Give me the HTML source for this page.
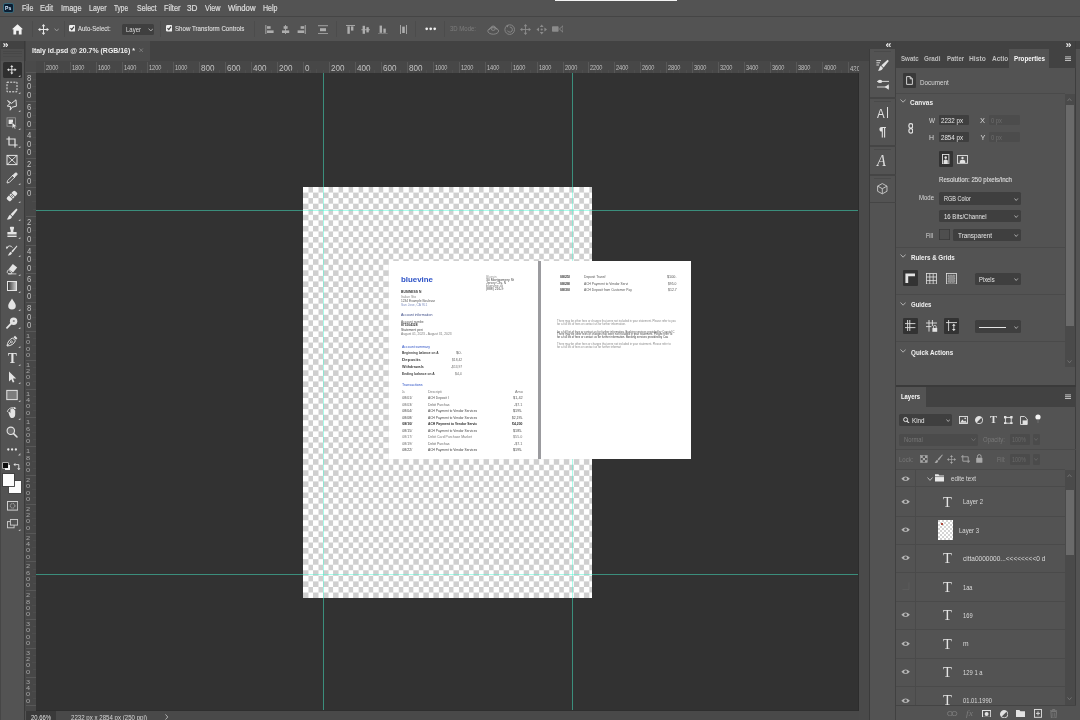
<!DOCTYPE html>
<html><head><meta charset="utf-8"><title>Photoshop</title>
<style>
html,body{margin:0;padding:0;background:#323232;}
body{width:1080px;height:720px;overflow:hidden;position:relative;font-family:"Liberation Sans",sans-serif;}
#f{position:absolute;left:-8px;top:-8px;width:1096px;height:736px;background:#535353;will-change:transform;filter:blur(0.35px);}
#r{position:absolute;left:8px;top:8px;width:1080px;height:720px;}
#r div,#r svg,#r span{position:absolute;}
.t{white-space:nowrap;transform-origin:0 50%;display:block;}
</style></head><body><div id="f"><div id="r">
<div style="left:0px;top:0px;width:1080px;height:16px;background:#535353;"></div>
<div style="left:0px;top:16.1px;width:1080px;height:1.3px;background:#454545;"></div>
<div style="left:0px;top:17px;width:1080px;height:23.5px;background:#535353;"></div>
<div style="left:0px;top:40.5px;width:1080px;height:20.5px;background:#424242;"></div>
<div style="left:25px;top:61px;width:834px;height:650px;background:#323232;"></div>
<div style="left:303.2px;top:187px;width:289.3px;height:411px;background-color:#fff;background-image:conic-gradient(#cfcfcf 25%,#fff 0 50%,#cfcfcf 0 75%,#fff 0);background-size:10.04px 11.12px;"></div>
<div style="left:323px;top:71.5px;width:1.2px;height:640px;background:rgba(70,250,212,0.46);"></div>
<div style="left:572px;top:71.5px;width:1.2px;height:640px;background:rgba(70,250,212,0.46);"></div>
<div style="left:35.5px;top:209.9px;width:823px;height:1.2px;background:rgba(70,250,212,0.46);"></div>
<div style="left:35.5px;top:574px;width:823px;height:1.2px;background:rgba(70,250,212,0.46);"></div>
<div style="left:388.5px;top:260.5px;width:302.5px;height:198.5px;background:#fff;"></div>
<div style="left:537.8px;top:260.5px;width:3.6px;height:198.5px;background:#9b9b9f;"></div>
<span class="t" style="left:401.4px;top:274px;font-size:7.6px;line-height:11px;height:11px;color:#2d52c6;font-weight:700;transform:scaleX(1.038);">bluevine</span>
<span class="t" style="left:485.9px;top:274px;font-size:3.6px;line-height:6px;height:6px;color:#9a9a9a;transform:scaleX(0.898);">Bluevin</span>
<span class="t" style="left:485.9px;top:277px;font-size:3.6px;line-height:6px;height:6px;color:#444;transform:scaleX(0.949);">30 Montgomery St</span>
<span class="t" style="left:485.9px;top:280px;font-size:3.6px;line-height:6px;height:6px;color:#555;transform:scaleX(0.908);">Jersey City, N</span>
<span class="t" style="left:485.9px;top:283px;font-size:3.6px;line-height:6px;height:6px;color:#777;transform:scaleX(0.950);">bluevine.co</span>
<span class="t" style="left:485.9px;top:286px;font-size:3.6px;line-height:6px;height:6px;color:#444;transform:scaleX(0.929);">(888) 216-9</span>
<span class="t" style="left:401.4px;top:289px;font-size:3.6px;line-height:6px;height:6px;color:#333;font-weight:700;transform:scaleX(0.927);">BUSINESS N</span>
<span class="t" style="left:401.4px;top:294px;font-size:3.6px;line-height:6px;height:6px;color:#8a8a8a;transform:scaleX(0.949);">Italian Sto</span>
<span class="t" style="left:401.4px;top:298px;font-size:3.6px;line-height:6px;height:6px;color:#555;transform:scaleX(0.895);">1234 Example Boulevar</span>
<span class="t" style="left:401.4px;top:302px;font-size:3.6px;line-height:6px;height:6px;color:#7f8fc0;transform:scaleX(0.913);">San Jose, CA 951</span>
<span class="t" style="left:401.4px;top:312px;font-size:3.6px;line-height:6px;height:6px;color:#3a4a86;transform:scaleX(0.987);">Account information</span>
<span class="t" style="left:401.4px;top:319px;font-size:3.6px;line-height:6px;height:6px;color:#555;transform:scaleX(0.903);">Account numbe</span>
<span class="t" style="left:401.4px;top:322px;font-size:3.6px;line-height:6px;height:6px;color:#333;font-weight:700;transform:scaleX(0.916);">875104328</span>
<span class="t" style="left:401.4px;top:327px;font-size:3.6px;line-height:6px;height:6px;color:#444;transform:scaleX(0.931);">Statement peri</span>
<span class="t" style="left:401.4px;top:331px;font-size:3.6px;line-height:6px;height:6px;color:#777;transform:scaleX(0.913);">August 01, 2023 - August 31, 2023</span>
<span class="t" style="left:401.9px;top:344px;font-size:3.6px;line-height:6px;height:6px;color:#2d52c6;transform:scaleX(0.972);">Account summary</span>
<span class="t" style="left:402.2px;top:350px;font-size:3.6px;line-height:6px;height:6px;color:#444;font-weight:700;transform:scaleX(0.896);">Beginning balance on A</span>
<span class="t" style="left:456.1px;top:350px;font-size:3.6px;line-height:6px;height:6px;color:#666;transform:scaleX(1.179);">$0.</span>
<span class="t" style="left:402.2px;top:357px;font-size:3.6px;line-height:6px;height:6px;color:#444;font-weight:700;transform:scaleX(1.237);">Deposits</span>
<span class="t" style="left:451.9px;top:357px;font-size:3.6px;line-height:6px;height:6px;color:#666;transform:scaleX(0.917);">$18,42</span>
<span class="t" style="left:402.2px;top:364px;font-size:3.6px;line-height:6px;height:6px;color:#444;font-weight:700;transform:scaleX(1.030);">Withdrawals</span>
<span class="t" style="left:451px;top:364px;font-size:3.6px;line-height:6px;height:6px;color:#666;transform:scaleX(0.901);">-$13,97</span>
<span class="t" style="left:402.2px;top:371px;font-size:3.6px;line-height:6px;height:6px;color:#444;font-weight:700;transform:scaleX(0.925);">Ending balance on A</span>
<span class="t" style="left:455.3px;top:371px;font-size:3.6px;line-height:6px;height:6px;color:#666;transform:scaleX(0.956);">$4,4</span>
<span class="t" style="left:402px;top:382px;font-size:3.6px;line-height:6px;height:6px;color:#2d52c6;transform:scaleX(1.011);">Transactions</span>
<span class="t" style="left:402.2px;top:389px;font-size:3.6px;line-height:6px;height:6px;color:#777;transform:scaleX(0.608);">Da</span>
<span class="t" style="left:428.3px;top:389px;font-size:3.6px;line-height:6px;height:6px;color:#777;transform:scaleX(0.971);">Descripti</span>
<span class="t" style="left:514.8px;top:389px;font-size:3.6px;line-height:6px;height:6px;color:#777;transform:scaleX(1.067);">Amo</span>
<span class="t" style="left:402.2px;top:395px;font-size:3.6px;line-height:6px;height:6px;color:#555;">08/01/</span>
<span class="t" style="left:428.3px;top:395px;font-size:3.6px;line-height:6px;height:6px;color:#555;transform:scaleX(0.908);">ACH Deposit I</span>
<span class="t" style="left:513px;top:395px;font-size:3.6px;line-height:6px;height:6px;color:#555;transform:scaleX(1.077);">$1,42</span>
<span class="t" style="left:402.2px;top:402px;font-size:3.6px;line-height:6px;height:6px;color:#666;">08/03/</span>
<span class="t" style="left:428.3px;top:402px;font-size:3.6px;line-height:6px;height:6px;color:#666;transform:scaleX(0.955);">Debit Purchas</span>
<span class="t" style="left:514.3px;top:402px;font-size:3.6px;line-height:6px;height:6px;color:#666;transform:scaleX(1.024);">-$7.1</span>
<span class="t" style="left:402.2px;top:408px;font-size:3.6px;line-height:6px;height:6px;color:#444;">08/04/</span>
<span class="t" style="left:428.3px;top:408px;font-size:3.6px;line-height:6px;height:6px;color:#444;transform:scaleX(0.911);">ACH Payment to Vendor Services</span>
<span class="t" style="left:513.4px;top:408px;font-size:3.6px;line-height:6px;height:6px;color:#444;transform:scaleX(1.032);">$195.</span>
<span class="t" style="left:402.2px;top:415px;font-size:3.6px;line-height:6px;height:6px;color:#444;">08/08/</span>
<span class="t" style="left:428.3px;top:415px;font-size:3.6px;line-height:6px;height:6px;color:#444;transform:scaleX(0.911);">ACH Payment to Vendor Services</span>
<span class="t" style="left:511.7px;top:415px;font-size:3.6px;line-height:6px;height:6px;color:#444;transform:scaleX(0.916);">$2,195.</span>
<span class="t" style="left:402.2px;top:421px;font-size:3.6px;line-height:6px;height:6px;color:#2c2c2c;font-weight:700;">08/10/</span>
<span class="t" style="left:428.3px;top:421px;font-size:3.6px;line-height:6px;height:6px;color:#2c2c2c;font-weight:700;transform:scaleX(0.925);">ACH Payment to Vendor Servic</span>
<span class="t" style="left:512.2px;top:421px;font-size:3.6px;line-height:6px;height:6px;color:#2c2c2c;font-weight:700;transform:scaleX(0.954);">$4,200</span>
<span class="t" style="left:402.2px;top:428px;font-size:3.6px;line-height:6px;height:6px;color:#4a4a4a;">08/15/</span>
<span class="t" style="left:428.3px;top:428px;font-size:3.6px;line-height:6px;height:6px;color:#4a4a4a;transform:scaleX(0.911);">ACH Payment to Vendor Services</span>
<span class="t" style="left:513.4px;top:428px;font-size:3.6px;line-height:6px;height:6px;color:#4a4a4a;transform:scaleX(1.032);">$185.</span>
<span class="t" style="left:402.2px;top:434px;font-size:3.6px;line-height:6px;height:6px;color:#777;">08/17/</span>
<span class="t" style="left:428.3px;top:434px;font-size:3.6px;line-height:6px;height:6px;color:#777;transform:scaleX(0.967);">Debit Card Purchase Market</span>
<span class="t" style="left:513.4px;top:434px;font-size:3.6px;line-height:6px;height:6px;color:#777;transform:scaleX(1.032);">$55.0</span>
<span class="t" style="left:402.2px;top:441px;font-size:3.6px;line-height:6px;height:6px;color:#666;">08/19/</span>
<span class="t" style="left:428.3px;top:441px;font-size:3.6px;line-height:6px;height:6px;color:#666;transform:scaleX(0.955);">Debit Purchas</span>
<span class="t" style="left:514.3px;top:441px;font-size:3.6px;line-height:6px;height:6px;color:#666;transform:scaleX(1.024);">-$7.1</span>
<span class="t" style="left:402.2px;top:447px;font-size:3.6px;line-height:6px;height:6px;color:#3a3a3a;">08/22/</span>
<span class="t" style="left:428.3px;top:447px;font-size:3.6px;line-height:6px;height:6px;color:#3a3a3a;transform:scaleX(0.911);">ACH Payment to Vendor Services</span>
<span class="t" style="left:513.4px;top:447px;font-size:3.6px;line-height:6px;height:6px;color:#3a3a3a;transform:scaleX(1.032);">$195.</span>
<span class="t" style="left:560.4px;top:274px;font-size:3.6px;line-height:6px;height:6px;color:#333;font-weight:700;transform:scaleX(0.989);">08/25/</span>
<span class="t" style="left:584.4px;top:274px;font-size:3.6px;line-height:6px;height:6px;color:#555;transform:scaleX(0.926);">Deposit Transf</span>
<span class="t" style="left:666.8px;top:274px;font-size:3.6px;line-height:6px;height:6px;color:#555;transform:scaleX(1.055);">$100.</span>
<span class="t" style="left:560.4px;top:281px;font-size:3.6px;line-height:6px;height:6px;color:#333;font-weight:700;transform:scaleX(0.989);">08/28/</span>
<span class="t" style="left:584.4px;top:281px;font-size:3.6px;line-height:6px;height:6px;color:#555;transform:scaleX(0.911);">ACH Payment to Vendor Servi</span>
<span class="t" style="left:667.9px;top:281px;font-size:3.6px;line-height:6px;height:6px;color:#555;transform:scaleX(0.932);">$95.0</span>
<span class="t" style="left:560.4px;top:287px;font-size:3.6px;line-height:6px;height:6px;color:#333;font-weight:700;transform:scaleX(0.989);">08/30/</span>
<span class="t" style="left:584.4px;top:287px;font-size:3.6px;line-height:6px;height:6px;color:#555;transform:scaleX(0.907);">ACH Deposit from Customer Pay</span>
<span class="t" style="left:667.5px;top:287px;font-size:3.6px;line-height:6px;height:6px;color:#555;transform:scaleX(0.977);">$12.7</span>
<span class="t" style="left:556.9px;top:318px;font-size:3.1px;line-height:6px;height:6px;color:#8a8a8a;transform:scaleX(0.896);">There may be other fees or charges that were not included in your statement. Please refer to you</span>
<span class="t" style="left:556.9px;top:321px;font-size:3.1px;line-height:6px;height:6px;color:#8a8a8a;transform:scaleX(0.910);">for a full list of fees or contact us for further information.</span>
<span class="t" style="left:556.9px;top:329px;font-size:3.1px;line-height:6px;height:6px;color:#555;transform:scaleX(0.895);">for a full list of fees or contact us for further information. Banking services provided by Coastal C</span>
<span class="t" style="left:556.9px;top:331px;font-size:3.1px;line-height:6px;height:6px;color:#4a4a4a;transform:scaleX(0.909);">There may be other fees or charges that were not included in your statement. Please refer to</span>
<span class="t" style="left:556.9px;top:334px;font-size:3.1px;line-height:6px;height:6px;color:#3c3c3c;transform:scaleX(0.901);">for a full list of fees or contact us for further information. Banking services provided by Coa</span>
<span class="t" style="left:556.9px;top:341px;font-size:3.1px;line-height:6px;height:6px;color:#8a8a8a;transform:scaleX(0.898);">There may be other fees or charges that were not included in your statement. Please refer to</span>
<span class="t" style="left:556.9px;top:344px;font-size:3.1px;line-height:6px;height:6px;color:#8a8a8a;transform:scaleX(0.905);">for a full list of fees or contact us for further informat</span>
<div style="left:25px;top:61px;width:834px;height:11.5px;background:#474747;"></div>
<div style="left:25px;top:61px;width:11px;height:650px;background:#474747;"></div>
<div style="left:25px;top:61px;width:11px;height:11.5px;background:#4a4a4a;"></div>
<div style="left:43.7px;top:61.5px;width:1px;height:11px;background:#585858;"></div>
<span class="t" style="left:45.7px;top:62px;font-size:7.6px;line-height:11px;height:11px;color:#c2c2c2;transform:scaleX(0.739);">2000</span>
<div style="left:50.18px;top:70px;width:1px;height:2.5px;background:#4d4d4d;"></div>
<div style="left:56.67px;top:69px;width:1px;height:3.5px;background:#4d4d4d;"></div>
<div style="left:63.15px;top:70px;width:1px;height:2.5px;background:#4d4d4d;"></div>
<div style="left:69.64px;top:61.5px;width:1px;height:11px;background:#585858;"></div>
<span class="t" style="left:71.64px;top:62px;font-size:7.6px;line-height:11px;height:11px;color:#c2c2c2;transform:scaleX(0.739);">1800</span>
<div style="left:76.13px;top:70px;width:1px;height:2.5px;background:#4d4d4d;"></div>
<div style="left:82.61px;top:69px;width:1px;height:3.5px;background:#4d4d4d;"></div>
<div style="left:89.1px;top:70px;width:1px;height:2.5px;background:#4d4d4d;"></div>
<div style="left:95.58px;top:61.5px;width:1px;height:11px;background:#585858;"></div>
<span class="t" style="left:97.58px;top:62px;font-size:7.6px;line-height:11px;height:11px;color:#c2c2c2;transform:scaleX(0.739);">1600</span>
<div style="left:102.07px;top:70px;width:1px;height:2.5px;background:#4d4d4d;"></div>
<div style="left:108.55px;top:69px;width:1px;height:3.5px;background:#4d4d4d;"></div>
<div style="left:115.04px;top:70px;width:1px;height:2.5px;background:#4d4d4d;"></div>
<div style="left:121.52px;top:61.5px;width:1px;height:11px;background:#585858;"></div>
<span class="t" style="left:123.52px;top:62px;font-size:7.6px;line-height:11px;height:11px;color:#c2c2c2;transform:scaleX(0.739);">1400</span>
<div style="left:128.01px;top:70px;width:1px;height:2.5px;background:#4d4d4d;"></div>
<div style="left:134.49px;top:69px;width:1px;height:3.5px;background:#4d4d4d;"></div>
<div style="left:140.98px;top:70px;width:1px;height:2.5px;background:#4d4d4d;"></div>
<div style="left:147.46px;top:61.5px;width:1px;height:11px;background:#585858;"></div>
<span class="t" style="left:149.46px;top:62px;font-size:7.6px;line-height:11px;height:11px;color:#c2c2c2;transform:scaleX(0.739);">1200</span>
<div style="left:153.95px;top:70px;width:1px;height:2.5px;background:#4d4d4d;"></div>
<div style="left:160.43px;top:69px;width:1px;height:3.5px;background:#4d4d4d;"></div>
<div style="left:166.92px;top:70px;width:1px;height:2.5px;background:#4d4d4d;"></div>
<div style="left:173.4px;top:61.5px;width:1px;height:11px;background:#585858;"></div>
<span class="t" style="left:175.4px;top:62px;font-size:7.6px;line-height:11px;height:11px;color:#c2c2c2;transform:scaleX(0.739);">1000</span>
<div style="left:179.89px;top:70px;width:1px;height:2.5px;background:#4d4d4d;"></div>
<div style="left:186.37px;top:69px;width:1px;height:3.5px;background:#4d4d4d;"></div>
<div style="left:192.86px;top:70px;width:1px;height:2.5px;background:#4d4d4d;"></div>
<div style="left:199.34px;top:61.5px;width:1px;height:11px;background:#585858;"></div>
<span class="t" style="left:201.34px;top:62px;font-size:8.6px;line-height:12px;height:12px;color:#c2c2c2;transform:scaleX(0.941);">800</span>
<div style="left:205.83px;top:70px;width:1px;height:2.5px;background:#4d4d4d;"></div>
<div style="left:212.31px;top:69px;width:1px;height:3.5px;background:#4d4d4d;"></div>
<div style="left:218.8px;top:70px;width:1px;height:2.5px;background:#4d4d4d;"></div>
<div style="left:225.28px;top:61.5px;width:1px;height:11px;background:#585858;"></div>
<span class="t" style="left:227.28px;top:62px;font-size:8.6px;line-height:12px;height:12px;color:#c2c2c2;transform:scaleX(0.941);">600</span>
<div style="left:231.77px;top:70px;width:1px;height:2.5px;background:#4d4d4d;"></div>
<div style="left:238.25px;top:69px;width:1px;height:3.5px;background:#4d4d4d;"></div>
<div style="left:244.74px;top:70px;width:1px;height:2.5px;background:#4d4d4d;"></div>
<div style="left:251.22px;top:61.5px;width:1px;height:11px;background:#585858;"></div>
<span class="t" style="left:253.22px;top:62px;font-size:8.6px;line-height:12px;height:12px;color:#c2c2c2;transform:scaleX(0.941);">400</span>
<div style="left:257.71px;top:70px;width:1px;height:2.5px;background:#4d4d4d;"></div>
<div style="left:264.19px;top:69px;width:1px;height:3.5px;background:#4d4d4d;"></div>
<div style="left:270.68px;top:70px;width:1px;height:2.5px;background:#4d4d4d;"></div>
<div style="left:277.16px;top:61.5px;width:1px;height:11px;background:#585858;"></div>
<span class="t" style="left:279.16px;top:62px;font-size:8.6px;line-height:12px;height:12px;color:#c2c2c2;transform:scaleX(0.941);">200</span>
<div style="left:283.65px;top:70px;width:1px;height:2.5px;background:#4d4d4d;"></div>
<div style="left:290.13px;top:69px;width:1px;height:3.5px;background:#4d4d4d;"></div>
<div style="left:296.62px;top:70px;width:1px;height:2.5px;background:#4d4d4d;"></div>
<div style="left:303.1px;top:61.5px;width:1px;height:11px;background:#585858;"></div>
<span class="t" style="left:305.1px;top:62px;font-size:8.6px;line-height:12px;height:12px;color:#c2c2c2;transform:scaleX(0.941);">0</span>
<div style="left:309.59px;top:70px;width:1px;height:2.5px;background:#4d4d4d;"></div>
<div style="left:316.07px;top:69px;width:1px;height:3.5px;background:#4d4d4d;"></div>
<div style="left:322.56px;top:70px;width:1px;height:2.5px;background:#4d4d4d;"></div>
<div style="left:329.04px;top:61.5px;width:1px;height:11px;background:#585858;"></div>
<span class="t" style="left:331.04px;top:62px;font-size:8.6px;line-height:12px;height:12px;color:#c2c2c2;transform:scaleX(0.941);">200</span>
<div style="left:335.53px;top:70px;width:1px;height:2.5px;background:#4d4d4d;"></div>
<div style="left:342.01px;top:69px;width:1px;height:3.5px;background:#4d4d4d;"></div>
<div style="left:348.5px;top:70px;width:1px;height:2.5px;background:#4d4d4d;"></div>
<div style="left:354.98px;top:61.5px;width:1px;height:11px;background:#585858;"></div>
<span class="t" style="left:356.98px;top:62px;font-size:8.6px;line-height:12px;height:12px;color:#c2c2c2;transform:scaleX(0.941);">400</span>
<div style="left:361.47px;top:70px;width:1px;height:2.5px;background:#4d4d4d;"></div>
<div style="left:367.95px;top:69px;width:1px;height:3.5px;background:#4d4d4d;"></div>
<div style="left:374.44px;top:70px;width:1px;height:2.5px;background:#4d4d4d;"></div>
<div style="left:380.92px;top:61.5px;width:1px;height:11px;background:#585858;"></div>
<span class="t" style="left:382.92px;top:62px;font-size:8.6px;line-height:12px;height:12px;color:#c2c2c2;transform:scaleX(0.941);">600</span>
<div style="left:387.41px;top:70px;width:1px;height:2.5px;background:#4d4d4d;"></div>
<div style="left:393.89px;top:69px;width:1px;height:3.5px;background:#4d4d4d;"></div>
<div style="left:400.38px;top:70px;width:1px;height:2.5px;background:#4d4d4d;"></div>
<div style="left:406.86px;top:61.5px;width:1px;height:11px;background:#585858;"></div>
<span class="t" style="left:408.86px;top:62px;font-size:8.6px;line-height:12px;height:12px;color:#c2c2c2;transform:scaleX(0.941);">800</span>
<div style="left:413.35px;top:70px;width:1px;height:2.5px;background:#4d4d4d;"></div>
<div style="left:419.83px;top:69px;width:1px;height:3.5px;background:#4d4d4d;"></div>
<div style="left:426.31px;top:70px;width:1px;height:2.5px;background:#4d4d4d;"></div>
<div style="left:432.8px;top:61.5px;width:1px;height:11px;background:#585858;"></div>
<span class="t" style="left:434.8px;top:62px;font-size:7.6px;line-height:11px;height:11px;color:#c2c2c2;transform:scaleX(0.739);">1000</span>
<div style="left:439.29px;top:70px;width:1px;height:2.5px;background:#4d4d4d;"></div>
<div style="left:445.77px;top:69px;width:1px;height:3.5px;background:#4d4d4d;"></div>
<div style="left:452.26px;top:70px;width:1px;height:2.5px;background:#4d4d4d;"></div>
<div style="left:458.74px;top:61.5px;width:1px;height:11px;background:#585858;"></div>
<span class="t" style="left:460.74px;top:62px;font-size:7.6px;line-height:11px;height:11px;color:#c2c2c2;transform:scaleX(0.739);">1200</span>
<div style="left:465.23px;top:70px;width:1px;height:2.5px;background:#4d4d4d;"></div>
<div style="left:471.71px;top:69px;width:1px;height:3.5px;background:#4d4d4d;"></div>
<div style="left:478.19px;top:70px;width:1px;height:2.5px;background:#4d4d4d;"></div>
<div style="left:484.68px;top:61.5px;width:1px;height:11px;background:#585858;"></div>
<span class="t" style="left:486.68px;top:62px;font-size:7.6px;line-height:11px;height:11px;color:#c2c2c2;transform:scaleX(0.739);">1400</span>
<div style="left:491.17px;top:70px;width:1px;height:2.5px;background:#4d4d4d;"></div>
<div style="left:497.65px;top:69px;width:1px;height:3.5px;background:#4d4d4d;"></div>
<div style="left:504.14px;top:70px;width:1px;height:2.5px;background:#4d4d4d;"></div>
<div style="left:510.62px;top:61.5px;width:1px;height:11px;background:#585858;"></div>
<span class="t" style="left:512.62px;top:62px;font-size:7.6px;line-height:11px;height:11px;color:#c2c2c2;transform:scaleX(0.739);">1600</span>
<div style="left:517.11px;top:70px;width:1px;height:2.5px;background:#4d4d4d;"></div>
<div style="left:523.59px;top:69px;width:1px;height:3.5px;background:#4d4d4d;"></div>
<div style="left:530.08px;top:70px;width:1px;height:2.5px;background:#4d4d4d;"></div>
<div style="left:536.56px;top:61.5px;width:1px;height:11px;background:#585858;"></div>
<span class="t" style="left:538.56px;top:62px;font-size:7.6px;line-height:11px;height:11px;color:#c2c2c2;transform:scaleX(0.739);">1800</span>
<div style="left:543.05px;top:70px;width:1px;height:2.5px;background:#4d4d4d;"></div>
<div style="left:549.53px;top:69px;width:1px;height:3.5px;background:#4d4d4d;"></div>
<div style="left:556.02px;top:70px;width:1px;height:2.5px;background:#4d4d4d;"></div>
<div style="left:562.5px;top:61.5px;width:1px;height:11px;background:#585858;"></div>
<span class="t" style="left:564.5px;top:62px;font-size:7.6px;line-height:11px;height:11px;color:#c2c2c2;transform:scaleX(0.739);">2000</span>
<div style="left:568.99px;top:70px;width:1px;height:2.5px;background:#4d4d4d;"></div>
<div style="left:575.47px;top:69px;width:1px;height:3.5px;background:#4d4d4d;"></div>
<div style="left:581.96px;top:70px;width:1px;height:2.5px;background:#4d4d4d;"></div>
<div style="left:588.44px;top:61.5px;width:1px;height:11px;background:#585858;"></div>
<span class="t" style="left:590.44px;top:62px;font-size:7.6px;line-height:11px;height:11px;color:#c2c2c2;transform:scaleX(0.739);">2200</span>
<div style="left:594.93px;top:70px;width:1px;height:2.5px;background:#4d4d4d;"></div>
<div style="left:601.41px;top:69px;width:1px;height:3.5px;background:#4d4d4d;"></div>
<div style="left:607.9px;top:70px;width:1px;height:2.5px;background:#4d4d4d;"></div>
<div style="left:614.38px;top:61.5px;width:1px;height:11px;background:#585858;"></div>
<span class="t" style="left:616.38px;top:62px;font-size:7.6px;line-height:11px;height:11px;color:#c2c2c2;transform:scaleX(0.739);">2400</span>
<div style="left:620.87px;top:70px;width:1px;height:2.5px;background:#4d4d4d;"></div>
<div style="left:627.35px;top:69px;width:1px;height:3.5px;background:#4d4d4d;"></div>
<div style="left:633.84px;top:70px;width:1px;height:2.5px;background:#4d4d4d;"></div>
<div style="left:640.32px;top:61.5px;width:1px;height:11px;background:#585858;"></div>
<span class="t" style="left:642.32px;top:62px;font-size:7.6px;line-height:11px;height:11px;color:#c2c2c2;transform:scaleX(0.739);">2600</span>
<div style="left:646.81px;top:70px;width:1px;height:2.5px;background:#4d4d4d;"></div>
<div style="left:653.29px;top:69px;width:1px;height:3.5px;background:#4d4d4d;"></div>
<div style="left:659.78px;top:70px;width:1px;height:2.5px;background:#4d4d4d;"></div>
<div style="left:666.26px;top:61.5px;width:1px;height:11px;background:#585858;"></div>
<span class="t" style="left:668.26px;top:62px;font-size:7.6px;line-height:11px;height:11px;color:#c2c2c2;transform:scaleX(0.739);">2800</span>
<div style="left:672.75px;top:70px;width:1px;height:2.5px;background:#4d4d4d;"></div>
<div style="left:679.23px;top:69px;width:1px;height:3.5px;background:#4d4d4d;"></div>
<div style="left:685.72px;top:70px;width:1px;height:2.5px;background:#4d4d4d;"></div>
<div style="left:692.2px;top:61.5px;width:1px;height:11px;background:#585858;"></div>
<span class="t" style="left:694.2px;top:62px;font-size:7.6px;line-height:11px;height:11px;color:#c2c2c2;transform:scaleX(0.739);">3000</span>
<div style="left:698.69px;top:70px;width:1px;height:2.5px;background:#4d4d4d;"></div>
<div style="left:705.17px;top:69px;width:1px;height:3.5px;background:#4d4d4d;"></div>
<div style="left:711.66px;top:70px;width:1px;height:2.5px;background:#4d4d4d;"></div>
<div style="left:718.14px;top:61.5px;width:1px;height:11px;background:#585858;"></div>
<span class="t" style="left:720.14px;top:62px;font-size:7.6px;line-height:11px;height:11px;color:#c2c2c2;transform:scaleX(0.739);">3200</span>
<div style="left:724.63px;top:70px;width:1px;height:2.5px;background:#4d4d4d;"></div>
<div style="left:731.11px;top:69px;width:1px;height:3.5px;background:#4d4d4d;"></div>
<div style="left:737.6px;top:70px;width:1px;height:2.5px;background:#4d4d4d;"></div>
<div style="left:744.08px;top:61.5px;width:1px;height:11px;background:#585858;"></div>
<span class="t" style="left:746.08px;top:62px;font-size:7.6px;line-height:11px;height:11px;color:#c2c2c2;transform:scaleX(0.739);">3400</span>
<div style="left:750.57px;top:70px;width:1px;height:2.5px;background:#4d4d4d;"></div>
<div style="left:757.05px;top:69px;width:1px;height:3.5px;background:#4d4d4d;"></div>
<div style="left:763.54px;top:70px;width:1px;height:2.5px;background:#4d4d4d;"></div>
<div style="left:770.02px;top:61.5px;width:1px;height:11px;background:#585858;"></div>
<span class="t" style="left:772.02px;top:62px;font-size:7.6px;line-height:11px;height:11px;color:#c2c2c2;transform:scaleX(0.739);">3600</span>
<div style="left:776.5px;top:70px;width:1px;height:2.5px;background:#4d4d4d;"></div>
<div style="left:782.99px;top:69px;width:1px;height:3.5px;background:#4d4d4d;"></div>
<div style="left:789.48px;top:70px;width:1px;height:2.5px;background:#4d4d4d;"></div>
<div style="left:795.96px;top:61.5px;width:1px;height:11px;background:#585858;"></div>
<span class="t" style="left:797.96px;top:62px;font-size:7.6px;line-height:11px;height:11px;color:#c2c2c2;transform:scaleX(0.739);">3800</span>
<div style="left:802.45px;top:70px;width:1px;height:2.5px;background:#4d4d4d;"></div>
<div style="left:808.93px;top:69px;width:1px;height:3.5px;background:#4d4d4d;"></div>
<div style="left:815.42px;top:70px;width:1px;height:2.5px;background:#4d4d4d;"></div>
<div style="left:821.9px;top:61.5px;width:1px;height:11px;background:#585858;"></div>
<span class="t" style="left:823.9px;top:62px;font-size:7.6px;line-height:11px;height:11px;color:#c2c2c2;transform:scaleX(0.739);">4000</span>
<div style="left:828.39px;top:70px;width:1px;height:2.5px;background:#4d4d4d;"></div>
<div style="left:834.87px;top:69px;width:1px;height:3.5px;background:#4d4d4d;"></div>
<div style="left:841.36px;top:70px;width:1px;height:2.5px;background:#4d4d4d;"></div>
<div style="left:847.84px;top:61.5px;width:1px;height:11px;background:#585858;"></div>
<span class="t" style="left:849.84px;top:63px;font-size:7.6px;line-height:11px;height:11px;color:#c2c2c2;transform:scaleX(0.789);">420</span>
<div style="left:854.33px;top:70px;width:1px;height:2.5px;background:#4d4d4d;"></div>
<div style="left:25.5px;top:71.8px;width:10.5px;height:1px;background:#585858;"></div>
<span class="t" style="left:26.6px;top:73px;font-size:8.2px;line-height:12px;height:12px;color:#c2c2c2;transform:scaleX(0.943);">8</span>
<span class="t" style="left:26.6px;top:81px;font-size:8.2px;line-height:12px;height:12px;color:#c2c2c2;transform:scaleX(0.943);">0</span>
<span class="t" style="left:26.6px;top:90px;font-size:8.2px;line-height:12px;height:12px;color:#c2c2c2;transform:scaleX(0.943);">0</span>
<div style="left:33px;top:79.0px;width:3px;height:1px;background:#4d4d4d;"></div>
<div style="left:32px;top:86.2px;width:4px;height:1px;background:#4d4d4d;"></div>
<div style="left:33px;top:93.4px;width:3px;height:1px;background:#4d4d4d;"></div>
<div style="left:25.5px;top:100.6px;width:10.5px;height:1px;background:#585858;"></div>
<span class="t" style="left:26.6px;top:102px;font-size:8.2px;line-height:12px;height:12px;color:#c2c2c2;transform:scaleX(0.943);">6</span>
<span class="t" style="left:26.6px;top:110px;font-size:8.2px;line-height:12px;height:12px;color:#c2c2c2;transform:scaleX(0.943);">0</span>
<span class="t" style="left:26.6px;top:119px;font-size:8.2px;line-height:12px;height:12px;color:#c2c2c2;transform:scaleX(0.943);">0</span>
<div style="left:33px;top:107.8px;width:3px;height:1px;background:#4d4d4d;"></div>
<div style="left:32px;top:115.0px;width:4px;height:1px;background:#4d4d4d;"></div>
<div style="left:33px;top:122.2px;width:3px;height:1px;background:#4d4d4d;"></div>
<div style="left:25.5px;top:129.4px;width:10.5px;height:1px;background:#585858;"></div>
<span class="t" style="left:26.6px;top:130px;font-size:8.2px;line-height:12px;height:12px;color:#c2c2c2;transform:scaleX(0.943);">4</span>
<span class="t" style="left:26.6px;top:139px;font-size:8.2px;line-height:12px;height:12px;color:#c2c2c2;transform:scaleX(0.943);">0</span>
<span class="t" style="left:26.6px;top:147px;font-size:8.2px;line-height:12px;height:12px;color:#c2c2c2;transform:scaleX(0.943);">0</span>
<div style="left:33px;top:136.6px;width:3px;height:1px;background:#4d4d4d;"></div>
<div style="left:32px;top:143.8px;width:4px;height:1px;background:#4d4d4d;"></div>
<div style="left:33px;top:151.0px;width:3px;height:1px;background:#4d4d4d;"></div>
<div style="left:25.5px;top:158.2px;width:10.5px;height:1px;background:#585858;"></div>
<span class="t" style="left:26.6px;top:159px;font-size:8.2px;line-height:12px;height:12px;color:#c2c2c2;transform:scaleX(0.943);">2</span>
<span class="t" style="left:26.6px;top:168px;font-size:8.2px;line-height:12px;height:12px;color:#c2c2c2;transform:scaleX(0.943);">0</span>
<span class="t" style="left:26.6px;top:176px;font-size:8.2px;line-height:12px;height:12px;color:#c2c2c2;transform:scaleX(0.943);">0</span>
<div style="left:33px;top:165.4px;width:3px;height:1px;background:#4d4d4d;"></div>
<div style="left:32px;top:172.6px;width:4px;height:1px;background:#4d4d4d;"></div>
<div style="left:33px;top:179.8px;width:3px;height:1px;background:#4d4d4d;"></div>
<div style="left:25.5px;top:187.0px;width:10.5px;height:1px;background:#585858;"></div>
<span class="t" style="left:26.6px;top:188px;font-size:8.2px;line-height:12px;height:12px;color:#c2c2c2;transform:scaleX(0.943);">0</span>
<div style="left:33px;top:194.2px;width:3px;height:1px;background:#4d4d4d;"></div>
<div style="left:32px;top:201.4px;width:4px;height:1px;background:#4d4d4d;"></div>
<div style="left:33px;top:208.6px;width:3px;height:1px;background:#4d4d4d;"></div>
<div style="left:25.5px;top:215.8px;width:10.5px;height:1px;background:#585858;"></div>
<span class="t" style="left:26.6px;top:217px;font-size:8.2px;line-height:12px;height:12px;color:#c2c2c2;transform:scaleX(0.943);">2</span>
<span class="t" style="left:26.6px;top:225px;font-size:8.2px;line-height:12px;height:12px;color:#c2c2c2;transform:scaleX(0.943);">0</span>
<span class="t" style="left:26.6px;top:234px;font-size:8.2px;line-height:12px;height:12px;color:#c2c2c2;transform:scaleX(0.943);">0</span>
<div style="left:33px;top:223.0px;width:3px;height:1px;background:#4d4d4d;"></div>
<div style="left:32px;top:230.2px;width:4px;height:1px;background:#4d4d4d;"></div>
<div style="left:33px;top:237.4px;width:3px;height:1px;background:#4d4d4d;"></div>
<div style="left:25.5px;top:244.6px;width:10.5px;height:1px;background:#585858;"></div>
<span class="t" style="left:26.6px;top:246px;font-size:8.2px;line-height:12px;height:12px;color:#c2c2c2;transform:scaleX(0.943);">4</span>
<span class="t" style="left:26.6px;top:254px;font-size:8.2px;line-height:12px;height:12px;color:#c2c2c2;transform:scaleX(0.943);">0</span>
<span class="t" style="left:26.6px;top:263px;font-size:8.2px;line-height:12px;height:12px;color:#c2c2c2;transform:scaleX(0.943);">0</span>
<div style="left:33px;top:251.8px;width:3px;height:1px;background:#4d4d4d;"></div>
<div style="left:32px;top:259.0px;width:4px;height:1px;background:#4d4d4d;"></div>
<div style="left:33px;top:266.2px;width:3px;height:1px;background:#4d4d4d;"></div>
<div style="left:25.5px;top:273.4px;width:10.5px;height:1px;background:#585858;"></div>
<span class="t" style="left:26.6px;top:274px;font-size:8.2px;line-height:12px;height:12px;color:#c2c2c2;transform:scaleX(0.943);">6</span>
<span class="t" style="left:26.6px;top:283px;font-size:8.2px;line-height:12px;height:12px;color:#c2c2c2;transform:scaleX(0.943);">0</span>
<span class="t" style="left:26.6px;top:291px;font-size:8.2px;line-height:12px;height:12px;color:#c2c2c2;transform:scaleX(0.943);">0</span>
<div style="left:33px;top:280.6px;width:3px;height:1px;background:#4d4d4d;"></div>
<div style="left:32px;top:287.8px;width:4px;height:1px;background:#4d4d4d;"></div>
<div style="left:33px;top:295.0px;width:3px;height:1px;background:#4d4d4d;"></div>
<div style="left:25.5px;top:302.2px;width:10.5px;height:1px;background:#585858;"></div>
<span class="t" style="left:26.6px;top:303px;font-size:8.2px;line-height:12px;height:12px;color:#c2c2c2;transform:scaleX(0.943);">8</span>
<span class="t" style="left:26.6px;top:312px;font-size:8.2px;line-height:12px;height:12px;color:#c2c2c2;transform:scaleX(0.943);">0</span>
<span class="t" style="left:26.6px;top:320px;font-size:8.2px;line-height:12px;height:12px;color:#c2c2c2;transform:scaleX(0.943);">0</span>
<div style="left:33px;top:309.4px;width:3px;height:1px;background:#4d4d4d;"></div>
<div style="left:32px;top:316.6px;width:4px;height:1px;background:#4d4d4d;"></div>
<div style="left:33px;top:323.8px;width:3px;height:1px;background:#4d4d4d;"></div>
<div style="left:25.5px;top:331.0px;width:10.5px;height:1px;background:#585858;"></div>
<span class="t" style="left:26px;top:331px;font-size:6.2px;line-height:9px;height:9px;color:#a6a6a6;transform:scaleX(1.189);">1</span>
<span class="t" style="left:26px;top:337px;font-size:6.2px;line-height:9px;height:9px;color:#a6a6a6;transform:scaleX(1.189);">0</span>
<span class="t" style="left:26px;top:344px;font-size:6.2px;line-height:9px;height:9px;color:#a6a6a6;transform:scaleX(1.189);">0</span>
<span class="t" style="left:26px;top:350px;font-size:6.2px;line-height:9px;height:9px;color:#a6a6a6;transform:scaleX(1.189);">0</span>
<div style="left:33px;top:338.2px;width:3px;height:1px;background:#4d4d4d;"></div>
<div style="left:32px;top:345.4px;width:4px;height:1px;background:#4d4d4d;"></div>
<div style="left:33px;top:352.6px;width:3px;height:1px;background:#4d4d4d;"></div>
<div style="left:25.5px;top:359.8px;width:10.5px;height:1px;background:#585858;"></div>
<span class="t" style="left:26px;top:360px;font-size:6.2px;line-height:9px;height:9px;color:#a6a6a6;transform:scaleX(1.189);">1</span>
<span class="t" style="left:26px;top:366px;font-size:6.2px;line-height:9px;height:9px;color:#a6a6a6;transform:scaleX(1.189);">2</span>
<span class="t" style="left:26px;top:372px;font-size:6.2px;line-height:9px;height:9px;color:#a6a6a6;transform:scaleX(1.189);">0</span>
<span class="t" style="left:26px;top:379px;font-size:6.2px;line-height:9px;height:9px;color:#a6a6a6;transform:scaleX(1.189);">0</span>
<div style="left:33px;top:367.0px;width:3px;height:1px;background:#4d4d4d;"></div>
<div style="left:32px;top:374.2px;width:4px;height:1px;background:#4d4d4d;"></div>
<div style="left:33px;top:381.4px;width:3px;height:1px;background:#4d4d4d;"></div>
<div style="left:25.5px;top:388.6px;width:10.5px;height:1px;background:#585858;"></div>
<span class="t" style="left:26px;top:389px;font-size:6.2px;line-height:9px;height:9px;color:#a6a6a6;transform:scaleX(1.189);">1</span>
<span class="t" style="left:26px;top:395px;font-size:6.2px;line-height:9px;height:9px;color:#a6a6a6;transform:scaleX(1.189);">4</span>
<span class="t" style="left:26px;top:401px;font-size:6.2px;line-height:9px;height:9px;color:#a6a6a6;transform:scaleX(1.189);">0</span>
<span class="t" style="left:26px;top:408px;font-size:6.2px;line-height:9px;height:9px;color:#a6a6a6;transform:scaleX(1.189);">0</span>
<div style="left:33px;top:395.8px;width:3px;height:1px;background:#4d4d4d;"></div>
<div style="left:32px;top:403.0px;width:4px;height:1px;background:#4d4d4d;"></div>
<div style="left:33px;top:410.2px;width:3px;height:1px;background:#4d4d4d;"></div>
<div style="left:25.5px;top:417.4px;width:10.5px;height:1px;background:#585858;"></div>
<span class="t" style="left:26px;top:417px;font-size:6.2px;line-height:9px;height:9px;color:#a6a6a6;transform:scaleX(1.189);">1</span>
<span class="t" style="left:26px;top:424px;font-size:6.2px;line-height:9px;height:9px;color:#a6a6a6;transform:scaleX(1.189);">6</span>
<span class="t" style="left:26px;top:430px;font-size:6.2px;line-height:9px;height:9px;color:#a6a6a6;transform:scaleX(1.189);">0</span>
<span class="t" style="left:26px;top:436px;font-size:6.2px;line-height:9px;height:9px;color:#a6a6a6;transform:scaleX(1.189);">0</span>
<div style="left:33px;top:424.6px;width:3px;height:1px;background:#4d4d4d;"></div>
<div style="left:32px;top:431.8px;width:4px;height:1px;background:#4d4d4d;"></div>
<div style="left:33px;top:439.0px;width:3px;height:1px;background:#4d4d4d;"></div>
<div style="left:25.5px;top:446.2px;width:10.5px;height:1px;background:#585858;"></div>
<span class="t" style="left:26px;top:446px;font-size:6.2px;line-height:9px;height:9px;color:#a6a6a6;transform:scaleX(1.189);">1</span>
<span class="t" style="left:26px;top:453px;font-size:6.2px;line-height:9px;height:9px;color:#a6a6a6;transform:scaleX(1.189);">8</span>
<span class="t" style="left:26px;top:459px;font-size:6.2px;line-height:9px;height:9px;color:#a6a6a6;transform:scaleX(1.189);">0</span>
<span class="t" style="left:26px;top:465px;font-size:6.2px;line-height:9px;height:9px;color:#a6a6a6;transform:scaleX(1.189);">0</span>
<div style="left:33px;top:453.4px;width:3px;height:1px;background:#4d4d4d;"></div>
<div style="left:32px;top:460.6px;width:4px;height:1px;background:#4d4d4d;"></div>
<div style="left:33px;top:467.8px;width:3px;height:1px;background:#4d4d4d;"></div>
<div style="left:25.5px;top:475.0px;width:10.5px;height:1px;background:#585858;"></div>
<span class="t" style="left:26px;top:475px;font-size:6.2px;line-height:9px;height:9px;color:#a6a6a6;transform:scaleX(1.189);">2</span>
<span class="t" style="left:26px;top:481px;font-size:6.2px;line-height:9px;height:9px;color:#a6a6a6;transform:scaleX(1.189);">0</span>
<span class="t" style="left:26px;top:488px;font-size:6.2px;line-height:9px;height:9px;color:#a6a6a6;transform:scaleX(1.189);">0</span>
<span class="t" style="left:26px;top:494px;font-size:6.2px;line-height:9px;height:9px;color:#a6a6a6;transform:scaleX(1.189);">0</span>
<div style="left:33px;top:482.2px;width:3px;height:1px;background:#4d4d4d;"></div>
<div style="left:32px;top:489.4px;width:4px;height:1px;background:#4d4d4d;"></div>
<div style="left:33px;top:496.6px;width:3px;height:1px;background:#4d4d4d;"></div>
<div style="left:25.5px;top:503.8px;width:10.5px;height:1px;background:#585858;"></div>
<span class="t" style="left:26px;top:504px;font-size:6.2px;line-height:9px;height:9px;color:#a6a6a6;transform:scaleX(1.189);">2</span>
<span class="t" style="left:26px;top:510px;font-size:6.2px;line-height:9px;height:9px;color:#a6a6a6;transform:scaleX(1.189);">2</span>
<span class="t" style="left:26px;top:516px;font-size:6.2px;line-height:9px;height:9px;color:#a6a6a6;transform:scaleX(1.189);">0</span>
<span class="t" style="left:26px;top:523px;font-size:6.2px;line-height:9px;height:9px;color:#a6a6a6;transform:scaleX(1.189);">0</span>
<div style="left:33px;top:511.0px;width:3px;height:1px;background:#4d4d4d;"></div>
<div style="left:32px;top:518.2px;width:4px;height:1px;background:#4d4d4d;"></div>
<div style="left:33px;top:525.4px;width:3px;height:1px;background:#4d4d4d;"></div>
<div style="left:25.5px;top:532.6px;width:10.5px;height:1px;background:#585858;"></div>
<span class="t" style="left:26px;top:533px;font-size:6.2px;line-height:9px;height:9px;color:#a6a6a6;transform:scaleX(1.189);">2</span>
<span class="t" style="left:26px;top:539px;font-size:6.2px;line-height:9px;height:9px;color:#a6a6a6;transform:scaleX(1.189);">4</span>
<span class="t" style="left:26px;top:545px;font-size:6.2px;line-height:9px;height:9px;color:#a6a6a6;transform:scaleX(1.189);">0</span>
<span class="t" style="left:26px;top:552px;font-size:6.2px;line-height:9px;height:9px;color:#a6a6a6;transform:scaleX(1.189);">0</span>
<div style="left:33px;top:539.8px;width:3px;height:1px;background:#4d4d4d;"></div>
<div style="left:32px;top:547.0px;width:4px;height:1px;background:#4d4d4d;"></div>
<div style="left:33px;top:554.2px;width:3px;height:1px;background:#4d4d4d;"></div>
<div style="left:25.5px;top:561.4px;width:10.5px;height:1px;background:#585858;"></div>
<span class="t" style="left:26px;top:561px;font-size:6.2px;line-height:9px;height:9px;color:#a6a6a6;transform:scaleX(1.189);">2</span>
<span class="t" style="left:26px;top:568px;font-size:6.2px;line-height:9px;height:9px;color:#a6a6a6;transform:scaleX(1.189);">6</span>
<span class="t" style="left:26px;top:574px;font-size:6.2px;line-height:9px;height:9px;color:#a6a6a6;transform:scaleX(1.189);">0</span>
<span class="t" style="left:26px;top:580px;font-size:6.2px;line-height:9px;height:9px;color:#a6a6a6;transform:scaleX(1.189);">0</span>
<div style="left:33px;top:568.6px;width:3px;height:1px;background:#4d4d4d;"></div>
<div style="left:32px;top:575.8px;width:4px;height:1px;background:#4d4d4d;"></div>
<div style="left:33px;top:583.0px;width:3px;height:1px;background:#4d4d4d;"></div>
<div style="left:25.5px;top:590.2px;width:10.5px;height:1px;background:#585858;"></div>
<span class="t" style="left:26px;top:590px;font-size:6.2px;line-height:9px;height:9px;color:#a6a6a6;transform:scaleX(1.189);">2</span>
<span class="t" style="left:26px;top:597px;font-size:6.2px;line-height:9px;height:9px;color:#a6a6a6;transform:scaleX(1.189);">8</span>
<span class="t" style="left:26px;top:603px;font-size:6.2px;line-height:9px;height:9px;color:#a6a6a6;transform:scaleX(1.189);">0</span>
<span class="t" style="left:26px;top:609px;font-size:6.2px;line-height:9px;height:9px;color:#a6a6a6;transform:scaleX(1.189);">0</span>
<div style="left:33px;top:597.4px;width:3px;height:1px;background:#4d4d4d;"></div>
<div style="left:32px;top:604.6px;width:4px;height:1px;background:#4d4d4d;"></div>
<div style="left:33px;top:611.8px;width:3px;height:1px;background:#4d4d4d;"></div>
<div style="left:25.5px;top:619.0px;width:10.5px;height:1px;background:#585858;"></div>
<span class="t" style="left:26px;top:619px;font-size:6.2px;line-height:9px;height:9px;color:#a6a6a6;transform:scaleX(1.189);">3</span>
<span class="t" style="left:26px;top:625px;font-size:6.2px;line-height:9px;height:9px;color:#a6a6a6;transform:scaleX(1.189);">0</span>
<span class="t" style="left:26px;top:632px;font-size:6.2px;line-height:9px;height:9px;color:#a6a6a6;transform:scaleX(1.189);">0</span>
<span class="t" style="left:26px;top:638px;font-size:6.2px;line-height:9px;height:9px;color:#a6a6a6;transform:scaleX(1.189);">0</span>
<div style="left:33px;top:626.2px;width:3px;height:1px;background:#4d4d4d;"></div>
<div style="left:32px;top:633.4px;width:4px;height:1px;background:#4d4d4d;"></div>
<div style="left:33px;top:640.6px;width:3px;height:1px;background:#4d4d4d;"></div>
<div style="left:25.5px;top:647.8px;width:10.5px;height:1px;background:#585858;"></div>
<span class="t" style="left:26px;top:648px;font-size:6.2px;line-height:9px;height:9px;color:#a6a6a6;transform:scaleX(1.189);">3</span>
<span class="t" style="left:26px;top:654px;font-size:6.2px;line-height:9px;height:9px;color:#a6a6a6;transform:scaleX(1.189);">2</span>
<span class="t" style="left:26px;top:660px;font-size:6.2px;line-height:9px;height:9px;color:#a6a6a6;transform:scaleX(1.189);">0</span>
<span class="t" style="left:26px;top:667px;font-size:6.2px;line-height:9px;height:9px;color:#a6a6a6;transform:scaleX(1.189);">0</span>
<div style="left:33px;top:655.0px;width:3px;height:1px;background:#4d4d4d;"></div>
<div style="left:32px;top:662.2px;width:4px;height:1px;background:#4d4d4d;"></div>
<div style="left:33px;top:669.4px;width:3px;height:1px;background:#4d4d4d;"></div>
<div style="left:25.5px;top:676.6px;width:10.5px;height:1px;background:#585858;"></div>
<span class="t" style="left:26px;top:677px;font-size:6.2px;line-height:9px;height:9px;color:#a6a6a6;transform:scaleX(1.189);">3</span>
<span class="t" style="left:26px;top:683px;font-size:6.2px;line-height:9px;height:9px;color:#a6a6a6;transform:scaleX(1.189);">4</span>
<span class="t" style="left:26px;top:689px;font-size:6.2px;line-height:9px;height:9px;color:#a6a6a6;transform:scaleX(1.189);">0</span>
<span class="t" style="left:26px;top:696px;font-size:6.2px;line-height:9px;height:9px;color:#a6a6a6;transform:scaleX(1.189);">0</span>
<div style="left:33px;top:683.8px;width:3px;height:1px;background:#4d4d4d;"></div>
<div style="left:32px;top:691.0px;width:4px;height:1px;background:#4d4d4d;"></div>
<div style="left:33px;top:698.2px;width:3px;height:1px;background:#4d4d4d;"></div>
<div style="left:25.5px;top:705.4px;width:10.5px;height:1px;background:#585858;"></div>
<div style="left:555.3px;top:0px;width:121.7px;height:1.2px;background:#f4f4f4;"></div>
<div style="left:3.8px;top:3.9px;width:9px;height:8.2px;background:#0b1f33;border-radius:1.2px;box-shadow:0 0 0 0.8px #2f6f86;"></div>
<span class="t" style="left:5.2px;top:4px;font-size:5.4px;line-height:8px;height:8px;color:#d6ecff;font-weight:700;transform:scaleX(0.939);">Ps</span>
<span class="t" style="left:22px;top:2px;font-size:8.6px;line-height:12px;height:12px;color:#dcdcdc;transform:scaleX(0.815);-webkit-text-stroke:0.22px #dcdcdc;">File</span>
<span class="t" style="left:40px;top:2px;font-size:8.6px;line-height:12px;height:12px;color:#dcdcdc;transform:scaleX(0.877);-webkit-text-stroke:0.22px #dcdcdc;">Edit</span>
<span class="t" style="left:61px;top:2px;font-size:8.6px;line-height:12px;height:12px;color:#dcdcdc;transform:scaleX(0.858);-webkit-text-stroke:0.22px #dcdcdc;">Image</span>
<span class="t" style="left:89px;top:2px;font-size:8.6px;line-height:12px;height:12px;color:#dcdcdc;transform:scaleX(0.813);-webkit-text-stroke:0.22px #dcdcdc;">Layer</span>
<span class="t" style="left:114px;top:2px;font-size:8.6px;line-height:12px;height:12px;color:#dcdcdc;transform:scaleX(0.751);-webkit-text-stroke:0.22px #dcdcdc;">Type</span>
<span class="t" style="left:137px;top:2px;font-size:8.6px;line-height:12px;height:12px;color:#dcdcdc;transform:scaleX(0.816);-webkit-text-stroke:0.22px #dcdcdc;">Select</span>
<span class="t" style="left:164px;top:2px;font-size:8.6px;line-height:12px;height:12px;color:#dcdcdc;transform:scaleX(0.863);-webkit-text-stroke:0.22px #dcdcdc;">Filter</span>
<span class="t" style="left:187px;top:2px;font-size:8.6px;line-height:12px;height:12px;color:#dcdcdc;transform:scaleX(0.955);-webkit-text-stroke:0.22px #dcdcdc;">3D</span>
<span class="t" style="left:205px;top:2px;font-size:8.6px;line-height:12px;height:12px;color:#dcdcdc;transform:scaleX(0.838);-webkit-text-stroke:0.22px #dcdcdc;">View</span>
<span class="t" style="left:228px;top:2px;font-size:8.6px;line-height:12px;height:12px;color:#dcdcdc;transform:scaleX(0.899);-webkit-text-stroke:0.22px #dcdcdc;">Window</span>
<span class="t" style="left:263px;top:2px;font-size:8.6px;line-height:12px;height:12px;color:#dcdcdc;transform:scaleX(0.820);-webkit-text-stroke:0.22px #dcdcdc;">Help</span>
<svg style="left:12px;top:24px;" width="11" height="10.6" viewBox="0 0 11 10.6"><path d="M5.5 0.2 L11 5.2 L9.6 5.2 L9.6 10.4 L6.8 10.4 L6.8 6.8 L4.2 6.8 L4.2 10.4 L1.4 10.4 L1.4 5.2 L0 5.2 Z" fill="#f2f2f2"/></svg>
<div style="left:32px;top:21px;width:1px;height:16px;background:#4c4c4c;"></div>
<svg style="left:38px;top:23.5px;" width="11" height="11" viewBox="0 0 11 11"><path d="M5.5 1.6 V9.4 M1.6 5.5 H9.4" stroke="#e6e6e6" stroke-width="1.0" fill="none"/><path d="M5.5 0 L7.3 2.3 L3.7 2.3Z M5.5 11 L7.3 8.7 L3.7 8.7Z M0 5.5 L2.3 3.7 L2.3 7.3Z M11 5.5 L8.7 3.7 L8.7 7.3Z" fill="#e6e6e6"/></svg>
<svg style="left:54px;top:28px;" width="5.4" height="4" viewBox="0 0 5.4 4"><path d="M0.6 0.6 L2.7 3 L4.8 0.6" fill="none" stroke="#a0a0a0" stroke-width="0.9"/></svg>
<div style="left:64px;top:21px;width:1px;height:16px;background:#4c4c4c;"></div>
<svg style="left:68.8px;top:25.3px;" width="6.4" height="6.4" viewBox="0 0 6.4 6.4"><rect x="0" y="0" width="6.4" height="6.4" rx="1.2" fill="#efefef"/><path d="M1.5 3.1 L2.8 4.6 L5 1.7" fill="none" stroke="#3a3a3a" stroke-width="1.1"/></svg>
<span class="t" style="left:78.3px;top:23px;font-size:7.6px;line-height:11px;height:11px;color:#dcdcdc;transform:scaleX(0.787);-webkit-text-stroke:0.15px #dcdcdc;">Auto-Select:</span>
<div style="left:121.7px;top:23.5px;width:32px;height:11.3px;background:#3f3f3f;border-radius:1.5px;"></div>
<span class="t" style="left:126px;top:24px;font-size:7.6px;line-height:11px;height:11px;color:#dcdcdc;transform:scaleX(0.789);">Layer</span>
<svg style="left:147.6px;top:27.6px;" width="5.6" height="4" viewBox="0 0 5.6 4"><path d="M0.6 0.6 L2.8 3 L5 0.6" fill="none" stroke="#b8b8b8" stroke-width="0.9"/></svg>
<div style="left:159.5px;top:21px;width:1px;height:16px;background:#4c4c4c;"></div>
<svg style="left:165.7px;top:25.3px;" width="6.4" height="6.4" viewBox="0 0 6.4 6.4"><rect x="0" y="0" width="6.4" height="6.4" rx="1.2" fill="#efefef"/><path d="M1.5 3.1 L2.8 4.6 L5 1.7" fill="none" stroke="#3a3a3a" stroke-width="1.1"/></svg>
<span class="t" style="left:175.3px;top:23px;font-size:7.6px;line-height:11px;height:11px;color:#dcdcdc;transform:scaleX(0.809);-webkit-text-stroke:0.15px #dcdcdc;">Show Transform Controls</span>
<div style="left:254px;top:21px;width:1px;height:16px;background:#4c4c4c;"></div>
<svg style="left:264.5px;top:24.5px;" width="10" height="9.5" viewBox="0 0 10 9.5"><rect x="0.4" y="0" width="0.9" height="9.5" fill="#adadad"/><rect x="2" y="1.2" width="3.6" height="2.6" fill="#adadad"/><rect x="2" y="5.4" width="6.6" height="2.6" fill="#adadad"/></svg>
<svg style="left:281px;top:24.5px;" width="10" height="9.5" viewBox="0 0 10 9.5"><rect x="4.1" y="0" width="0.9" height="9.5" fill="#adadad"/><rect x="2.6" y="1.2" width="4" height="2.6" fill="#adadad"/><rect x="1" y="5.4" width="7.2" height="2.6" fill="#adadad"/></svg>
<svg style="left:296.5px;top:24.5px;" width="10" height="9.5" viewBox="0 0 10 9.5"><rect x="7.8" y="0" width="0.9" height="9.5" fill="#adadad"/><rect x="3.6" y="1.2" width="3.6" height="2.6" fill="#adadad"/><rect x="0.6" y="5.4" width="6.6" height="2.6" fill="#adadad"/></svg>
<svg style="left:317.5px;top:24.5px;" width="10" height="9.5" viewBox="0 0 10 9.5"><rect x="0" y="0.3" width="10" height="0.9" fill="#adadad"/><rect x="2" y="3.2" width="6" height="3" fill="#adadad"/><rect x="0" y="8.2" width="10" height="0.9" fill="#adadad"/></svg>
<div style="left:336.3px;top:21px;width:1px;height:16px;background:#4c4c4c;"></div>
<svg style="left:345.5px;top:24.5px;" width="10" height="9.5" viewBox="0 0 10 9.5"><rect x="0" y="0" width="9" height="0.9" fill="#adadad"/><rect x="1.4" y="1.4" width="2.4" height="7.4" fill="#adadad"/><rect x="5" y="1.4" width="2.4" height="4.2" fill="#adadad"/></svg>
<svg style="left:361px;top:24.5px;" width="10" height="9.5" viewBox="0 0 10 9.5"><rect x="0.4" y="4.3" width="8.6" height="0.9" fill="#adadad"/><rect x="1.6" y="0.8" width="2.4" height="8" fill="#adadad"/><rect x="5.4" y="2.2" width="2.4" height="5.2" fill="#adadad"/></svg>
<svg style="left:377.5px;top:24.5px;" width="10" height="9.5" viewBox="0 0 10 9.5"><rect x="0" y="8.6" width="9.6" height="0.9" fill="#adadad"/><rect x="1.6" y="0.6" width="2.4" height="7.2" fill="#adadad"/><rect x="5.4" y="3.6" width="2.4" height="4.2" fill="#adadad"/></svg>
<svg style="left:399px;top:24.5px;" width="10" height="9.5" viewBox="0 0 10 9.5"><rect x="1" y="0" width="0.9" height="9.5" fill="#adadad"/><rect x="3.2" y="1.6" width="2.6" height="6.4" fill="#adadad"/><rect x="7" y="0" width="0.9" height="9.5" fill="#adadad"/></svg>
<div style="left:415px;top:21px;width:1px;height:16px;background:#4c4c4c;"></div>
<svg style="left:425px;top:27.3px;" width="12" height="3.6" viewBox="0 0 12 3.6"><circle cx="1.7" cy="1.8" r="1.35" fill="#f0f0f0"/><circle cx="5.7" cy="1.8" r="1.35" fill="#f0f0f0"/><circle cx="9.7" cy="1.8" r="1.35" fill="#f0f0f0"/></svg>
<div style="left:444px;top:21px;width:1px;height:16px;background:#4c4c4c;"></div>
<span class="t" style="left:449.6px;top:23px;font-size:7.4px;line-height:11px;height:11px;color:#7d7d7d;transform:scaleX(0.810);">3D Mode:</span>
<svg style="left:487px;top:23.5px;" width="12.5" height="11" viewBox="0 0 12.5 11"><ellipse cx="6.2" cy="7" rx="5.4" ry="3.2" fill="none" stroke="#8b8b8b" stroke-width="0.9"/><path d="M2 6 A4.4 4.4 0 0 1 10.4 6" fill="none" stroke="#8b8b8b" stroke-width="0.9"/><circle cx="6.2" cy="4.2" r="2.2" fill="none" stroke="#8b8b8b" stroke-width="0.9"/></svg>
<svg style="left:504px;top:23.5px;" width="11.5" height="11" viewBox="0 0 11.5 11"><circle cx="5.7" cy="5.6" r="4.8" fill="none" stroke="#8b8b8b" stroke-width="0.9"/><path d="M5.7 3 A2.6 2.6 0 1 1 3.4 6.6" fill="none" stroke="#8b8b8b" stroke-width="0.9"/><path d="M2.2 1.4 L4.6 1.2 L3.6 3.4Z" fill="#8b8b8b"/></svg>
<svg style="left:519.6px;top:23.5px;" width="11" height="11" viewBox="0 0 11 11"><path d="M5.5 1.6 V9.4 M1.6 5.5 H9.4" stroke="#8b8b8b" stroke-width="0.9" fill="none"/><path d="M5.5 0 L7.3 2.3 L3.7 2.3Z M5.5 11 L7.3 8.7 L3.7 8.7Z M0 5.5 L2.3 3.7 L2.3 7.3Z M11 5.5 L8.7 3.7 L8.7 7.3Z" fill="#8b8b8b"/></svg>
<svg style="left:536px;top:23.5px;" width="11.5" height="11" viewBox="0 0 11.5 11"><path d="M5.7 0.4 L7.6 3 L3.8 3Z M5.7 10.6 L7.6 8 L3.8 8Z M0.4 5.5 L3 3.6 L3 7.4Z M11 5.5 L8.4 3.6 L8.4 7.4Z" fill="#8b8b8b"/><circle cx="5.7" cy="5.5" r="1.1" fill="#8b8b8b"/></svg>
<svg style="left:551.6px;top:25px;" width="11.6" height="8" viewBox="0 0 11.6 8"><rect x="0" y="1.2" width="6.6" height="5.6" rx="0.8" fill="#8b8b8b"/><path d="M7.4 4 L11 0.8 L11 7.2Z" fill="none" stroke="#8b8b8b" stroke-width="0.9"/></svg>
<div style="left:25.5px;top:40.8px;width:124.6px;height:20.2px;background:#4c4c4c;"></div>
<span class="t" style="left:31.7px;top:45px;font-size:7.8px;line-height:11px;height:11px;color:#f0f0f0;font-weight:700;transform:scaleX(0.891);">Italy id.psd @ 20.7% (RGB/16) *</span>
<svg style="left:139.4px;top:48.4px;" width="4.4" height="4.4" viewBox="0 0 4.4 4.4"><path d="M0.5 0.5 L3.9 3.9 M3.9 0.5 L0.5 3.9" stroke="#808080" stroke-width="0.9"/></svg>
<div style="left:0px;top:48.5px;width:24.5px;height:672px;background:#535353;"></div>
<div style="left:24.3px;top:40.5px;width:1px;height:680px;background:#3a3a3a;"></div>
<div style="left:0px;top:40.5px;width:0.8px;height:680px;background:#464646;"></div>
<svg style="left:3.4px;top:42.8px;" width="5" height="4.2" viewBox="0 0 5 4.2"><path d="M0.5 0.3 L2.1 2.1 L0.5 3.9 M2.9 0.3 L4.5 2.1 L2.9 3.9" fill="none" stroke="#f0f0f0" stroke-width="1.15"/></svg>
<div style="left:0.8px;top:48.5px;width:23.5px;height:12px;background:#4e4e4e;"></div>
<div style="left:3px;top:51px;width:19px;height:0.8px;background:#474747;"></div>
<div style="left:3px;top:53.4px;width:19px;height:0.8px;background:#474747;"></div>
<div style="left:3px;top:55.8px;width:19px;height:0.8px;background:#494949;"></div>
<div style="left:3px;top:61.8px;width:19px;height:15.8px;background:#2f2f2f;border-radius:1.5px;"></div>
<svg style="left:7.4px;top:65.2px;" width="9.6" height="9.6" viewBox="0 0 11 11"><path d="M5.5 1.6 V9.4 M1.6 5.5 H9.4" stroke="#e4e4e4" stroke-width="1.1" fill="none"/><path d="M5.5 0 L7.3 2.3 L3.7 2.3Z M5.5 11 L7.3 8.7 L3.7 8.7Z M0 5.5 L2.3 3.7 L2.3 7.3Z M11 5.5 L8.7 3.7 L8.7 7.3Z" fill="#e4e4e4"/></svg>
<svg style="left:18.4px;top:74.6px;" width="2.4" height="2.4" viewBox="0 0 2.4 2.4"><path d="M2.4 0 L2.4 2.4 L0 2.4Z" fill="#bdbdbd"/></svg>
<svg style="left:6px;top:81.0px;" width="12" height="12" viewBox="0 0 12 12"><rect x="1" y="1.2" width="10" height="9.6" fill="none" stroke="#e4e4e4" stroke-width="1" stroke-dasharray="2 1.2"/></svg>
<svg style="left:18.4px;top:91.6px;" width="2.4" height="2.4" viewBox="0 0 2.4 2.4"><path d="M2.4 0 L2.4 2.4 L0 2.4Z" fill="#bdbdbd"/></svg>
<svg style="left:6px;top:99.0px;" width="12" height="12" viewBox="0 0 12 12"><path d="M1.6 1.6 L5.6 4.4 L10 0.8 L10.4 7.2 L6.2 8.2 L4.2 11.2 L4.6 7.6 L1.2 7 L4 4.6 Z" fill="none" stroke="#e4e4e4" stroke-width="1" stroke-linejoin="round"/></svg>
<svg style="left:18.4px;top:109.6px;" width="2.4" height="2.4" viewBox="0 0 2.4 2.4"><path d="M2.4 0 L2.4 2.4 L0 2.4Z" fill="#bdbdbd"/></svg>
<svg style="left:6px;top:117.0px;" width="12" height="12" viewBox="0 0 12 12"><rect x="1" y="0.8" width="8.4" height="8.4" fill="none" stroke="#9a9a9a" stroke-width="0.8"/><rect x="2.6" y="2.6" width="4.4" height="4.4" fill="#e4e4e4"/><path d="M6.2 5.4 L6.2 11.4 L7.8 10 L8.8 12 L9.8 11.5 L8.8 9.6 L10.8 9.4 Z" fill="#e4e4e4" stroke="#535353" stroke-width="0.4"/></svg>
<svg style="left:18.4px;top:127.6px;" width="2.4" height="2.4" viewBox="0 0 2.4 2.4"><path d="M2.4 0 L2.4 2.4 L0 2.4Z" fill="#bdbdbd"/></svg>
<svg style="left:6px;top:135.5px;" width="12" height="12" viewBox="0 0 12 12"><path d="M3 0.4 V9 H11.6 M0.4 3 H9 V11.6" fill="none" stroke="#e4e4e4" stroke-width="1.2"/></svg>
<svg style="left:18.4px;top:146.1px;" width="2.4" height="2.4" viewBox="0 0 2.4 2.4"><path d="M2.4 0 L2.4 2.4 L0 2.4Z" fill="#bdbdbd"/></svg>
<svg style="left:6px;top:154.0px;" width="12" height="12" viewBox="0 0 12 12"><rect x="1" y="1.4" width="10" height="9.2" fill="none" stroke="#e4e4e4" stroke-width="1"/><path d="M1 1.4 L11 10.6 M11 1.4 L1 10.6" stroke="#e4e4e4" stroke-width="0.9"/></svg>
<svg style="left:6px;top:172.0px;" width="12" height="12" viewBox="0 0 12 12"><path d="M1 11 L1.6 8.6 L6.6 3.6 L8.4 5.4 L3.4 10.4 Z" fill="none" stroke="#e4e4e4" stroke-width="0.9"/><path d="M6 3 L9 6 M7 3.4 L9.4 1 A1.2 1.2 0 0 1 11 2.6 L8.6 5 Z" fill="#e4e4e4" stroke="#e4e4e4" stroke-width="1"/></svg>
<svg style="left:18.4px;top:182.6px;" width="2.4" height="2.4" viewBox="0 0 2.4 2.4"><path d="M2.4 0 L2.4 2.4 L0 2.4Z" fill="#bdbdbd"/></svg>
<svg style="left:6px;top:190.0px;" width="12" height="12" viewBox="0 0 12 12"><g transform="rotate(-45 6 6)"><rect x="0.2" y="3.4" width="11.6" height="5.2" rx="1.6" fill="#e4e4e4"/><rect x="4.2" y="3.4" width="0.7" height="5.2" fill="#535353"/><rect x="7.1" y="3.4" width="0.7" height="5.2" fill="#535353"/><circle cx="6" cy="5.2" r="0.45" fill="#535353"/><circle cx="6" cy="6.8" r="0.45" fill="#535353"/></g></svg>
<svg style="left:18.4px;top:200.6px;" width="2.4" height="2.4" viewBox="0 0 2.4 2.4"><path d="M2.4 0 L2.4 2.4 L0 2.4Z" fill="#bdbdbd"/></svg>
<svg style="left:6px;top:208.0px;" width="12" height="12" viewBox="0 0 12 12"><path d="M10.4 0.6 L11.6 1.8 L6.6 8.2 L4.6 6.2 Z" fill="#e4e4e4"/><path d="M4 6.8 L6 8.8 C5.4 11 3 11.8 0.8 11.2 C2.4 10.2 2.2 7.8 4 6.8Z" fill="#e4e4e4"/></svg>
<svg style="left:18.4px;top:218.6px;" width="2.4" height="2.4" viewBox="0 0 2.4 2.4"><path d="M2.4 0 L2.4 2.4 L0 2.4Z" fill="#bdbdbd"/></svg>
<svg style="left:6px;top:226.0px;" width="12" height="12" viewBox="0 0 12 12"><path d="M4.6 0.8 H7.4 C8.4 0.8 8.2 2.2 7.6 3.4 C7.2 4.4 7.2 5.4 7.4 6 H10.6 V8.6 H1.4 V6 H4.6 C4.8 5.4 4.8 4.4 4.4 3.4 C3.8 2.2 3.6 0.8 4.6 0.8Z" fill="#e4e4e4"/><rect x="1.4" y="9.6" width="9.2" height="1.4" fill="#e4e4e4"/></svg>
<svg style="left:18.4px;top:236.6px;" width="2.4" height="2.4" viewBox="0 0 2.4 2.4"><path d="M2.4 0 L2.4 2.4 L0 2.4Z" fill="#bdbdbd"/></svg>
<svg style="left:6px;top:244.5px;" width="12" height="12" viewBox="0 0 12 12"><path d="M10.8 0.6 L11.4 1.2 L6.6 7.4 L5.4 6.2 Z" fill="#e4e4e4"/><path d="M4.8 6.8 L6 8 C5.4 10 3.6 10.8 1.8 10.4 C3 9.6 3.2 7.6 4.8 6.8Z" fill="#e4e4e4"/><path d="M0.8 3.2 A3 3 0 0 1 6.4 2.6" fill="none" stroke="#e4e4e4" stroke-width="0.9"/><path d="M0 1.6 L2.4 2.2 L0.6 4.2Z" fill="#e4e4e4"/></svg>
<svg style="left:18.4px;top:255.1px;" width="2.4" height="2.4" viewBox="0 0 2.4 2.4"><path d="M2.4 0 L2.4 2.4 L0 2.4Z" fill="#bdbdbd"/></svg>
<svg style="left:6px;top:263.0px;" width="12" height="12" viewBox="0 0 12 12"><path d="M6.8 1 L11.2 4.4 L7 9.6 L2.6 6.2 Z" fill="#e4e4e4"/><path d="M2.2 6.8 L6.2 10 L5.4 10.8 H2.6 L1 9.2 Z" fill="none" stroke="#e4e4e4" stroke-width="0.8"/><path d="M2 10.9 H10.4" stroke="#e4e4e4" stroke-width="0.8"/></svg>
<svg style="left:18.4px;top:273.6px;" width="2.4" height="2.4" viewBox="0 0 2.4 2.4"><path d="M2.4 0 L2.4 2.4 L0 2.4Z" fill="#bdbdbd"/></svg>
<div style="left:6.8px;top:281.2px;width:10.4px;height:9.8px;box-sizing:border-box;border:1px solid #e4e4e4;background:linear-gradient(90deg,#3c3c3c,#c8c8c8);"></div>
<svg style="left:18.4px;top:291.1px;" width="2.4" height="2.4" viewBox="0 0 2.4 2.4"><path d="M2.4 0 L2.4 2.4 L0 2.4Z" fill="#bdbdbd"/></svg>
<svg style="left:6px;top:298.0px;" width="12" height="12" viewBox="0 0 12 12"><path d="M6 0.6 C7.4 3.4 9.8 5.4 9.8 7.8 A3.8 3.8 0 0 1 2.2 7.8 C2.2 5.4 4.6 3.4 6 0.6Z" fill="#e4e4e4"/></svg>
<svg style="left:18.4px;top:308.6px;" width="2.4" height="2.4" viewBox="0 0 2.4 2.4"><path d="M2.4 0 L2.4 2.4 L0 2.4Z" fill="#bdbdbd"/></svg>
<svg style="left:6px;top:316.5px;" width="12" height="12" viewBox="0 0 12 12"><circle cx="7.6" cy="4.2" r="3.7" fill="#e4e4e4"/><path d="M5 6.6 L1 10.8" stroke="#e4e4e4" stroke-width="1.8" stroke-linecap="round"/><circle cx="7.8" cy="4" r="1.1" fill="#8a8a8a"/></svg>
<svg style="left:18.4px;top:327.1px;" width="2.4" height="2.4" viewBox="0 0 2.4 2.4"><path d="M2.4 0 L2.4 2.4 L0 2.4Z" fill="#bdbdbd"/></svg>
<svg style="left:6px;top:335.0px;" width="12" height="12" viewBox="0 0 12 12"><path d="M1 11 C1.4 7.4 3.2 4.4 6.6 3 L9.4 5.8 C8 9 5 10.8 1 11Z" fill="none" stroke="#e4e4e4" stroke-width="1"/><path d="M7.4 2.2 L9 0.8 L11.4 3.2 L10 4.8Z" fill="#e4e4e4"/><circle cx="5.4" cy="6.8" r="1" fill="none" stroke="#e4e4e4" stroke-width="0.8"/><path d="M1.2 10.8 L4.6 7.4" stroke="#e4e4e4" stroke-width="0.7"/></svg>
<svg style="left:18.4px;top:345.6px;" width="2.4" height="2.4" viewBox="0 0 2.4 2.4"><path d="M2.4 0 L2.4 2.4 L0 2.4Z" fill="#bdbdbd"/></svg>
<span class="t" style="left:8.2px;top:349px;font-size:14px;line-height:19px;height:19px;color:#e4e4e4;font-weight:700;transform:scaleX(0.942);font-family:'Liberation Serif',serif;">T</span>
<svg style="left:18.4px;top:363.6px;" width="2.4" height="2.4" viewBox="0 0 2.4 2.4"><path d="M2.4 0 L2.4 2.4 L0 2.4Z" fill="#bdbdbd"/></svg>
<svg style="left:6px;top:371.0px;" width="12" height="12" viewBox="0 0 12 12"><path d="M3 0.6 L3 10.4 L5.4 8.2 L6.8 11.6 L8.4 10.9 L7 7.6 L10.2 7.4 Z" fill="#e4e4e4"/></svg>
<svg style="left:18.4px;top:381.6px;" width="2.4" height="2.4" viewBox="0 0 2.4 2.4"><path d="M2.4 0 L2.4 2.4 L0 2.4Z" fill="#bdbdbd"/></svg>
<svg style="left:6px;top:389.0px;" width="12" height="12" viewBox="0 0 12 12"><rect x="0.8" y="1.4" width="10.4" height="9.2" fill="#7d7d7d" stroke="#e4e4e4" stroke-width="1"/></svg>
<svg style="left:18.4px;top:399.6px;" width="2.4" height="2.4" viewBox="0 0 2.4 2.4"><path d="M2.4 0 L2.4 2.4 L0 2.4Z" fill="#bdbdbd"/></svg>
<svg style="left:6px;top:407.0px;" width="12" height="12" viewBox="0 0 12 12"><path d="M2.6 6 C2 4.8 3.2 4.2 3.8 5.2 L4.4 6.2 V2.6 C4.4 1.6 5.6 1.6 5.6 2.6 V1.8 C5.6 0.8 6.8 0.8 6.8 1.8 V2.4 C6.8 1.6 8 1.6 8 2.4 V3.4 C8 2.8 9.2 2.8 9.2 3.6 V7.6 C9.2 9.8 8 11 6.4 11 C4.8 11 4 10 3.4 8.4 Z" fill="#e4e4e4"/><path d="M1.2 5 A5.6 5.6 0 0 1 8.6 0.9" fill="none" stroke="#e4e4e4" stroke-width="0.8"/><path d="M8 -0.2 L10.4 1.2 L8 2.4Z" fill="#e4e4e4"/></svg>
<svg style="left:18.4px;top:417.6px;" width="2.4" height="2.4" viewBox="0 0 2.4 2.4"><path d="M2.4 0 L2.4 2.4 L0 2.4Z" fill="#bdbdbd"/></svg>
<svg style="left:6px;top:425.5px;" width="12" height="12" viewBox="0 0 12 12"><circle cx="4.8" cy="4.8" r="3.7" fill="#6c6c6c" stroke="#e4e4e4" stroke-width="1.1"/><path d="M7.6 7.6 L11 11" stroke="#e4e4e4" stroke-width="1.5" stroke-linecap="round"/></svg>
<svg style="left:7.2px;top:447.5px;" width="10.4" height="3" viewBox="0 0 10.4 3"><circle cx="1.3" cy="1.5" r="1.15" fill="#e4e4e4"/><circle cx="5.1" cy="1.5" r="1.15" fill="#e4e4e4"/><circle cx="8.9" cy="1.5" r="1.15" fill="#e4e4e4"/></svg>
<svg style="left:18.4px;top:453.2px;" width="2.4" height="2.4" viewBox="0 0 2.4 2.4"><path d="M2.4 0 L2.4 2.4 L0 2.4Z" fill="#bdbdbd"/></svg>
<div style="left:5.4px;top:465.2px;width:4.6px;height:4.6px;background:#f2f2f2;"></div>
<div style="left:3.4px;top:463.2px;width:4.4px;height:4.4px;background:#0c0c0c;box-shadow:0 0 0 0.6px #e8e8e8;"></div>
<svg style="left:13px;top:462.6px;" width="7.6" height="7.6" viewBox="0 0 7.6 7.6"><path d="M2.2 1.6 H5.8 V5.4" fill="none" stroke="#e4e4e4" stroke-width="0.9"/><path d="M2.4 0 L0.4 1.6 L2.4 3.2Z M4.2 5.2 L5.8 7.4 L7.4 5.2Z" fill="#e4e4e4"/></svg>
<div style="left:9px;top:480.6px;width:11.6px;height:12.3px;background:#fdfdfd;box-shadow:0 0 0 0.6px #3f3f3f;"></div>
<div style="left:3.1px;top:473.8px;width:11.3px;height:12.2px;background:#fdfdfd;box-shadow:0 0 0 0.9px #3f3f3f;"></div>
<svg style="left:6.9px;top:501px;" width="11.2" height="9.6" viewBox="0 0 11.2 9.6"><rect x="0.5" y="0.5" width="10.2" height="8.6" fill="none" stroke="#cfcfcf" stroke-width="1"/><circle cx="5.6" cy="4.8" r="2.3" fill="none" stroke="#cfcfcf" stroke-width="0.8" stroke-dasharray="1 0.7"/></svg>
<svg style="left:6.9px;top:519.4px;" width="11.2" height="9.4" viewBox="0 0 11.2 9.4"><rect x="0.5" y="2.6" width="6.6" height="6.2" fill="none" stroke="#cfcfcf" stroke-width="0.9"/><rect x="3.4" y="0.5" width="7.2" height="5.6" fill="#535353" stroke="#cfcfcf" stroke-width="0.9"/></svg>
<svg style="left:18.4px;top:529px;" width="2.4" height="2.4" viewBox="0 0 2.4 2.4"><path d="M2.4 0 L2.4 2.4 L0 2.4Z" fill="#bdbdbd"/></svg>
<div style="left:36px;top:709.6px;width:822.5px;height:1.6px;background:#2e2e2e;"></div>
<div style="left:25.5px;top:711px;width:833.5px;height:9.5px;background:#494949;"></div>
<div style="left:25.5px;top:711px;width:30px;height:9.5px;background:#3a3a3a;"></div>
<span class="t" style="left:30.5px;top:713px;font-size:6.8px;line-height:10px;height:10px;color:#e0e0e0;transform:scaleX(0.867);">20.66%</span>
<span class="t" style="left:70.8px;top:713px;font-size:6.8px;line-height:10px;height:10px;color:#d6d6d6;transform:scaleX(0.901);">2232 px x 2854 px (250 ppi)</span>
<svg style="left:164.5px;top:713.8px;" width="3.4" height="6" viewBox="0 0 3.4 6"><path d="M0.5 0.4 L2.8 3 L0.5 5.6" fill="none" stroke="#c8c8c8" stroke-width="0.8"/></svg>
<div style="left:858.6px;top:60.6px;width:11.6px;height:660px;background:#4a4a4a;"></div>
<div style="left:858.4px;top:72.5px;width:0.9px;height:638px;background:#2c2c2c;"></div>
<div style="left:869.3px;top:48.5px;width:1px;height:672px;background:#3b3b3b;"></div>
<div style="left:870.2px;top:48.5px;width:25.2px;height:672px;background:#535353;"></div>
<div style="left:896px;top:48.5px;width:179.5px;height:672px;background:#535353;"></div>
<div style="left:895.2px;top:40.5px;width:1px;height:680px;background:#414141;"></div>
<div style="left:1076.3px;top:48.5px;width:3.7px;height:672px;background:#535353;"></div>
<div style="left:1075.3px;top:40.5px;width:1.1px;height:680px;background:#3e3e3e;"></div>
<svg style="left:886px;top:42.8px;" width="5" height="4.2" viewBox="0 0 5 4.2"><path d="M2.1 0.3 L0.5 2.1 L2.1 3.9 M4.5 0.3 L2.9 2.1 L4.5 3.9" fill="none" stroke="#f0f0f0" stroke-width="1.15"/></svg>
<svg style="left:1065.6px;top:42.8px;" width="5" height="4.2" viewBox="0 0 5 4.2"><path d="M0.5 0.3 L2.1 2.1 L0.5 3.9 M2.9 0.3 L4.5 2.1 L2.9 3.9" fill="none" stroke="#f0f0f0" stroke-width="1.15"/></svg>
<div style="left:870px;top:97.4px;width:25.5px;height:1.4px;background:#454545;"></div>
<div style="left:870px;top:145.4px;width:25.5px;height:1.4px;background:#454545;"></div>
<div style="left:870px;top:174.4px;width:25.5px;height:1.4px;background:#454545;"></div>
<div style="left:870px;top:201.9px;width:25.5px;height:1.4px;background:#454545;"></div>
<div style="left:874px;top:50.5px;width:17px;height:0.8px;background:#4a4a4a;"></div>
<div style="left:874px;top:100.5px;width:17px;height:0.8px;background:#4a4a4a;"></div>
<div style="left:874px;top:148.5px;width:17px;height:0.8px;background:#4a4a4a;"></div>
<div style="left:874px;top:177.5px;width:17px;height:0.8px;background:#4a4a4a;"></div>
<svg style="left:876px;top:58.5px;" width="13" height="13" viewBox="0 0 13 13"><path d="M0.4 1.6 H5 M0.4 3.8 H4 M0.4 6 H3" stroke="#e2e2e2" stroke-width="0.9"/><path d="M11.6 0.8 L12.8 2 L7.6 8.4 L5.4 6.2 Z" fill="#e2e2e2"/><path d="M4.8 6.8 L7 9 C6.2 11.2 4 12.2 2 11.6 C3.4 10.6 3.2 8 4.8 6.8Z" fill="#e2e2e2"/></svg>
<svg style="left:876.5px;top:78.5px;" width="12.5" height="11" viewBox="0 0 12.5 11"><path d="M0 2.4 H12 M0 8 H12" stroke="#e2e2e2" stroke-width="0.9"/><ellipse cx="3" cy="2.4" rx="2.2" ry="1.7" fill="#e2e2e2"/><path d="M11.8 5.2 V10.8 L7.6 8 Z" fill="#e2e2e2"/></svg>
<span class="t" style="left:877.4px;top:106px;font-size:12.5px;line-height:17px;height:17px;color:#e2e2e2;transform:scaleX(0.912);">A</span>
<div style="left:886.8px;top:107.4px;width:0.9px;height:11px;background:#e2e2e2;"></div>
<span class="t" style="left:878.8px;top:124px;font-size:12.5px;line-height:17px;height:17px;color:#e2e2e2;font-weight:700;transform:scaleX(1.064);">¶</span>
<span class="t" style="left:876.6px;top:150px;font-size:17px;line-height:22px;height:22px;color:#e2e2e2;transform:scaleX(0.847);font-family:'Liberation Serif',serif;font-style:italic;">A</span>
<svg style="left:877.2px;top:183.4px;" width="10.6" height="11.4" viewBox="0 0 11.4 12.4"><path d="M5.7 0.6 L10.8 3.4 V9 L5.7 11.8 L0.6 9 V3.4 Z M0.6 3.4 L5.7 6.2 L10.8 3.4 M5.7 6.2 V11.8" fill="none" stroke="#cfcfcf" stroke-width="0.95" stroke-linejoin="round"/></svg>
<div style="left:896px;top:48.5px;width:179.5px;height:19px;background:#424242;"></div>
<div style="left:1009.4px;top:48.8px;width:40px;height:19px;background:#535353;"></div>
<span class="t" style="left:901px;top:53px;font-size:7.4px;line-height:11px;height:11px;color:#bdbdbd;font-weight:700;transform:scaleX(0.832);">Swatc</span>
<span class="t" style="left:924.2px;top:53px;font-size:7.4px;line-height:11px;height:11px;color:#bdbdbd;font-weight:700;transform:scaleX(0.849);">Gradi</span>
<span class="t" style="left:946.7px;top:53px;font-size:7.4px;line-height:11px;height:11px;color:#bdbdbd;font-weight:700;transform:scaleX(0.815);">Patter</span>
<span class="t" style="left:969.2px;top:53px;font-size:7.4px;line-height:11px;height:11px;color:#bdbdbd;font-weight:700;transform:scaleX(0.908);">Histo</span>
<span class="t" style="left:991.7px;top:53px;font-size:7.4px;line-height:11px;height:11px;color:#bdbdbd;font-weight:700;transform:scaleX(0.881);">Actio</span>
<span class="t" style="left:1014px;top:53px;font-size:7.6px;line-height:11px;height:11px;color:#fafafa;font-weight:700;transform:scaleX(0.825);">Properties</span>
<svg style="left:1064.6px;top:55.6px;" width="6.6" height="5.4" viewBox="0 0 6.6 5.4"><path d="M0 0.9 H6.6 M0 2.7 H6.6 M0 4.5 H6.6" stroke="#cfcfcf" stroke-width="0.9"/></svg>
<div style="left:903px;top:73px;width:13.2px;height:14.8px;background:#393939;border-radius:1px;"></div>
<svg style="left:906px;top:75.8px;" width="7.2" height="9.4" viewBox="0 0 7.2 9.4"><path d="M0.6 0.6 H4.2 L6.4 2.8 V8.4 H0.6 Z M4.2 0.6 V2.8 H6.4" fill="none" stroke="#e2e2e2" stroke-width="0.9"/></svg>
<span class="t" style="left:920.3px;top:77px;font-size:7.2px;line-height:11px;height:11px;color:#dadada;transform:scaleX(0.875);">Document</span>
<div style="left:896px;top:92.5px;width:168.5px;height:1px;background:#4a4a4a;"></div>
<div style="left:1064.6px;top:93.5px;width:10.8px;height:273px;background:#4a4a4a;"></div>
<svg style="left:1067.4px;top:98.4px;" width="5" height="3.4" viewBox="0 0 5 3.4"><path d="M0.5 3 L2.5 0.6 L4.5 3" fill="none" stroke="#7a7a7a" stroke-width="0.8"/></svg>
<div style="left:1065.6px;top:105px;width:8.8px;height:221px;background:#6a6a6a;"></div>
<svg style="left:1067.4px;top:359.6px;" width="5" height="3.4" viewBox="0 0 5 3.4"><path d="M0.5 0.4 L2.5 2.8 L4.5 0.4" fill="none" stroke="#7a7a7a" stroke-width="0.8"/></svg>
<svg style="left:900px;top:99.4px;" width="6.2" height="4" viewBox="0 0 6.2 4"><path d="M0.5 0.5 L3.1 3.2 L5.7 0.5" fill="none" stroke="#bcbcbc" stroke-width="0.9"/></svg>
<span class="t" style="left:909.6px;top:97px;font-size:7.6px;line-height:11px;height:11px;color:#f0f0f0;font-weight:700;transform:scaleX(0.851);">Canvas</span>
<span class="t" style="left:928.6px;top:115px;font-size:7.2px;line-height:11px;height:11px;color:#dadada;transform:scaleX(0.883);">W</span>
<div style="left:938.7px;top:115px;width:30.8px;height:10.2px;background:#3f3f3f;border-radius:1px;"></div>
<span class="t" style="left:940.6px;top:115px;font-size:7.2px;line-height:11px;height:11px;color:#e8e8e8;transform:scaleX(0.859);">2232 px</span>
<span class="t" style="left:980.2px;top:115px;font-size:7.2px;line-height:11px;height:11px;color:#dadada;transform:scaleX(1.041);">X</span>
<div style="left:988.7px;top:115px;width:31.5px;height:10.2px;background:#4c4c4c;border-radius:1px;"></div>
<span class="t" style="left:991px;top:116px;font-size:7px;line-height:10px;height:10px;color:#6e6e6e;transform:scaleX(0.831);">0 px</span>
<span class="t" style="left:929.4px;top:132px;font-size:7.2px;line-height:11px;height:11px;color:#dadada;transform:scaleX(0.962);">H</span>
<div style="left:938.7px;top:132.3px;width:30.8px;height:10.2px;background:#3f3f3f;border-radius:1px;"></div>
<span class="t" style="left:940.6px;top:132px;font-size:7.2px;line-height:11px;height:11px;color:#e8e8e8;transform:scaleX(0.859);">2854 px</span>
<span class="t" style="left:980.4px;top:132px;font-size:7.2px;line-height:11px;height:11px;color:#dadada;">Y</span>
<div style="left:988.7px;top:132.3px;width:31.5px;height:10.2px;background:#4c4c4c;border-radius:1px;"></div>
<span class="t" style="left:991px;top:133px;font-size:7px;line-height:10px;height:10px;color:#6e6e6e;transform:scaleX(0.831);">0 px</span>
<svg style="left:907.6px;top:123.4px;" width="5.6" height="10.8" viewBox="0 0 5.6 10.8"><rect x="0.9" y="0.7" width="3.8" height="4.4" rx="1.8" fill="none" stroke="#e2e2e2" stroke-width="1.25"/><rect x="0.9" y="5.7" width="3.8" height="4.4" rx="1.8" fill="none" stroke="#e2e2e2" stroke-width="1.25"/></svg>
<div style="left:938.7px;top:151.2px;width:14.4px;height:15.8px;background:#333;border-radius:1px;"></div>
<svg style="left:942.2px;top:153.8px;" width="7.4" height="10.6" viewBox="0 0 7.4 10.6"><rect x="0.5" y="0.5" width="6.4" height="9.6" fill="none" stroke="#e2e2e2" stroke-width="0.9"/><circle cx="3.7" cy="3.6" r="1.3" fill="#e2e2e2"/><path d="M1.6 10 V6.6 Q3.7 4.6 5.8 6.6 V10Z" fill="#e2e2e2"/></svg>
<svg style="left:957px;top:155px;" width="11" height="8.8" viewBox="0 0 11 8.8"><rect x="0.5" y="0.5" width="10" height="7.8" fill="none" stroke="#e2e2e2" stroke-width="0.9"/><circle cx="5.5" cy="3" r="1.2" fill="#e2e2e2"/><path d="M2.8 8 V5.8 Q5.5 3.8 8.2 5.8 V8Z" fill="#e2e2e2"/></svg>
<span class="t" style="left:938.8px;top:175px;font-size:7px;line-height:10px;height:10px;color:#dadada;transform:scaleX(0.877);-webkit-text-stroke:0.15px #dadada;">Resolution: 250 pixels/inch</span>
<span class="t" style="left:918.8px;top:192px;font-size:7.2px;line-height:11px;height:11px;color:#dadada;transform:scaleX(0.833);">Mode</span>
<div style="left:939px;top:192.4px;width:82px;height:12.6px;background:#3f3f3f;border-radius:1.5px;"></div>
<span class="t" style="left:943.8px;top:193px;font-size:7.2px;line-height:11px;height:11px;color:#e8e8e8;transform:scaleX(0.770);">RGB Color</span>
<svg style="left:1014.4px;top:197.6px;" width="4.4" height="3.2" viewBox="0 0 4.4 3.2"><path d="M0.5 0.5 L2.2 2.5 L3.9 0.5" fill="none" stroke="#b4b4b4" stroke-width="0.9"/></svg>
<div style="left:939px;top:209.7px;width:82px;height:12.8px;background:#3f3f3f;border-radius:1.5px;"></div>
<span class="t" style="left:944px;top:211px;font-size:7.2px;line-height:11px;height:11px;color:#e8e8e8;transform:scaleX(0.838);">16 Bits/Channel</span>
<svg style="left:1014.4px;top:214.9px;" width="4.4" height="3.2" viewBox="0 0 4.4 3.2"><path d="M0.5 0.5 L2.2 2.5 L3.9 0.5" fill="none" stroke="#b4b4b4" stroke-width="0.9"/></svg>
<span class="t" style="left:925.8px;top:230px;font-size:7.2px;line-height:11px;height:11px;color:#dadada;transform:scaleX(0.761);">Fill</span>
<div style="left:939px;top:229px;width:11px;height:11.4px;background:#4e4e4e;box-shadow:inset 0 0 0 0.8px #3a3a3a;"></div>
<div style="left:953.3px;top:229px;width:67.7px;height:11.6px;background:#3f3f3f;border-radius:1.5px;"></div>
<span class="t" style="left:957.8px;top:230px;font-size:7.2px;line-height:11px;height:11px;color:#e8e8e8;transform:scaleX(0.887);">Transparent</span>
<svg style="left:1014.4px;top:233.6px;" width="4.4" height="3.2" viewBox="0 0 4.4 3.2"><path d="M0.5 0.5 L2.2 2.5 L3.9 0.5" fill="none" stroke="#b4b4b4" stroke-width="0.9"/></svg>
<div style="left:896px;top:247px;width:168.5px;height:1px;background:#4a4a4a;"></div>
<svg style="left:900px;top:254.39999999999998px;" width="6.2" height="4" viewBox="0 0 6.2 4"><path d="M0.5 0.5 L3.1 3.2 L5.7 0.5" fill="none" stroke="#bcbcbc" stroke-width="0.9"/></svg>
<span class="t" style="left:911px;top:252px;font-size:7.6px;line-height:11px;height:11px;color:#f0f0f0;font-weight:700;transform:scaleX(0.821);">Rulers &amp; Grids</span>
<div style="left:902.8px;top:270px;width:15.2px;height:16.2px;background:#333;border-radius:1px;"></div>
<svg style="left:905.4px;top:273px;" width="10.2" height="10.2" viewBox="0 0 10.2 10.2"><path d="M0.4 10 V0.4 H10 V3.2 H3.2 V10 Z" fill="#e2e2e2"/></svg>
<svg style="left:925.7px;top:272.6px;" width="11" height="11.6" viewBox="0 0 11 11.6"><rect x="0.5" y="0.5" width="10" height="10.6" fill="none" stroke="#e2e2e2" stroke-width="0.8"/><path d="M3.8 0.5 V11 M7.2 0.5 V11 M0.5 4 H10.5 M0.5 7.6 H10.5" stroke="#e2e2e2" stroke-width="0.8"/></svg>
<svg style="left:946.4px;top:272.6px;" width="11" height="11.6" viewBox="0 0 11 11.6"><rect x="0.5" y="0.5" width="10" height="10.6" fill="none" stroke="#e2e2e2" stroke-width="0.8"/><rect x="2.2" y="2.2" width="6.6" height="7.2" fill="#8a8a8a" stroke="#e2e2e2" stroke-width="0.5" stroke-dasharray="0.8 0.8"/></svg>
<div style="left:974.6px;top:272.6px;width:46.4px;height:12.8px;background:#3f3f3f;border-radius:1.5px;"></div>
<span class="t" style="left:979px;top:274px;font-size:7.2px;line-height:11px;height:11px;color:#e8e8e8;transform:scaleX(0.812);">Pixels</span>
<svg style="left:1014.4px;top:277.8px;" width="4.4" height="3.2" viewBox="0 0 4.4 3.2"><path d="M0.5 0.5 L2.2 2.5 L3.9 0.5" fill="none" stroke="#b4b4b4" stroke-width="0.9"/></svg>
<div style="left:896px;top:294.4px;width:168.5px;height:1px;background:#4a4a4a;"></div>
<svg style="left:900px;top:301.8px;" width="6.2" height="4" viewBox="0 0 6.2 4"><path d="M0.5 0.5 L3.1 3.2 L5.7 0.5" fill="none" stroke="#bcbcbc" stroke-width="0.9"/></svg>
<span class="t" style="left:911px;top:299px;font-size:7.6px;line-height:11px;height:11px;color:#f0f0f0;font-weight:700;transform:scaleX(0.792);">Guides</span>
<div style="left:902.8px;top:317.5px;width:15.2px;height:16px;background:#333;border-radius:1px;"></div>
<svg style="left:905.4px;top:320px;" width="10.4" height="11" viewBox="0 0 10.4 11"><path d="M0 3.6 H10.4 M0 7.6 H10.4" stroke="#e2e2e2" stroke-width="0.9"/><path d="M2.6 0 V11 M4.8 0 V11" stroke="#e2e2e2" stroke-width="0.9"/></svg>
<svg style="left:926px;top:319.6px;" width="11.6" height="12" viewBox="0 0 11.6 12"><path d="M3 0 V11.6 M6.4 0 V6 M0 3 H11 M0 6.6 H5.4" stroke="#e2e2e2" stroke-width="0.9"/><rect x="6.4" y="8" width="4.8" height="3.8" fill="#e2e2e2"/><path d="M7.4 8 V6.8 A1.4 1.4 0 0 1 10.2 6.8 V8" fill="none" stroke="#e2e2e2" stroke-width="0.8"/></svg>
<div style="left:944px;top:317.5px;width:14.8px;height:16px;background:#333;border-radius:1px;"></div>
<svg style="left:946px;top:320px;" width="11" height="11.4" viewBox="0 0 11 11.4"><path d="M2.6 0 V11.4 M0 2.6 H11" stroke="#e2e2e2" stroke-width="0.9"/><path d="M7.8 4.4 V10.4" stroke="#e2e2e2" stroke-width="0.9"/><path d="M6 5.8 L7.8 3.8 L9.6 5.8Z M6 9 L7.8 11 L9.6 9Z" fill="#e2e2e2"/></svg>
<div style="left:974.6px;top:320.4px;width:46.4px;height:13px;background:#3f3f3f;border-radius:1.5px;"></div>
<div style="left:978.6px;top:326.7px;width:27.4px;height:1.3px;background:#e6e6e6;"></div>
<svg style="left:1014.4px;top:325.6px;" width="4.4" height="3.2" viewBox="0 0 4.4 3.2"><path d="M0.5 0.5 L2.2 2.5 L3.9 0.5" fill="none" stroke="#b4b4b4" stroke-width="0.9"/></svg>
<div style="left:896px;top:341.2px;width:168.5px;height:1px;background:#4a4a4a;"></div>
<svg style="left:900px;top:349.0px;" width="6.2" height="4" viewBox="0 0 6.2 4"><path d="M0.5 0.5 L3.1 3.2 L5.7 0.5" fill="none" stroke="#bcbcbc" stroke-width="0.9"/></svg>
<span class="t" style="left:911px;top:347px;font-size:7.6px;line-height:11px;height:11px;color:#f0f0f0;font-weight:700;transform:scaleX(0.830);">Quick Actions</span>
<div style="left:896px;top:385.2px;width:179.5px;height:2.2px;background:#3a3a3a;"></div>
<div style="left:896px;top:387.3px;width:179.5px;height:19.4px;background:#424242;"></div>
<div style="left:896px;top:387.3px;width:30.2px;height:19.4px;background:#535353;"></div>
<span class="t" style="left:901.2px;top:391px;font-size:7.6px;line-height:11px;height:11px;color:#fafafa;font-weight:700;transform:scaleX(0.775);">Layers</span>
<svg style="left:1064.6px;top:393.8px;" width="6.6" height="5.4" viewBox="0 0 6.6 5.4"><path d="M0 0.9 H6.6 M0 2.7 H6.6 M0 4.5 H6.6" stroke="#cfcfcf" stroke-width="0.9"/></svg>
<div style="left:899.2px;top:413.6px;width:52.8px;height:12px;background:#3f3f3f;border-radius:1.5px;"></div>
<svg style="left:903px;top:416.6px;" width="6.6" height="6.8" viewBox="0 0 6.6 6.8"><circle cx="2.6" cy="2.6" r="2" fill="none" stroke="#e2e2e2" stroke-width="1"/><path d="M4.1 4.2 L6.2 6.4" stroke="#e2e2e2" stroke-width="1.1"/></svg>
<span class="t" style="left:912px;top:415px;font-size:7.2px;line-height:11px;height:11px;color:#e8e8e8;transform:scaleX(0.874);">Kind</span>
<svg style="left:946.0px;top:418.8px;" width="4.4" height="3.2" viewBox="0 0 4.4 3.2"><path d="M0.5 0.5 L2.2 2.5 L3.9 0.5" fill="none" stroke="#b4b4b4" stroke-width="0.9"/></svg>
<svg style="left:959.4px;top:416px;" width="9" height="8" viewBox="0 0 9 8"><rect x="0.5" y="0.5" width="8" height="7" fill="none" stroke="#e2e2e2" stroke-width="0.9"/><path d="M1 6.8 L3.4 3.6 L5 5.4 L6.2 4.4 L8 6.8Z" fill="#e2e2e2"/><circle cx="6.2" cy="2.4" r="0.8" fill="#e2e2e2"/></svg>
<svg style="left:974.6px;top:416px;" width="8.2" height="8.2" viewBox="0 0 8.2 8.2"><circle cx="4.1" cy="4.1" r="3.6" fill="none" stroke="#e2e2e2" stroke-width="0.9"/><path d="M1.5 6.7 A3.6 3.6 0 0 1 6.7 1.5 Z" fill="#e2e2e2"/></svg>
<span class="t" style="left:990.2px;top:413px;font-size:10px;line-height:14px;height:14px;color:#e2e2e2;font-weight:700;transform:scaleX(1.049);font-family:'Liberation Serif',serif;">T</span>
<svg style="left:1004.4px;top:415.8px;" width="8.6" height="8.6" viewBox="0 0 8.6 8.6"><rect x="1.4" y="1.4" width="5.8" height="5.8" fill="none" stroke="#e2e2e2" stroke-width="0.9"/><rect x="0" y="0" width="2.4" height="2.4" fill="#e2e2e2"/><rect x="6.2" y="0" width="2.4" height="2.4" fill="#e2e2e2"/><rect x="0" y="6.2" width="2.4" height="2.4" fill="#e2e2e2"/><rect x="6.2" y="6.2" width="2.4" height="2.4" fill="#e2e2e2"/></svg>
<svg style="left:1020px;top:415.6px;" width="7.8" height="9" viewBox="0 0 7.8 9"><path d="M0.5 0.5 H4.6 L7.2 3 V8.5 H0.5Z" fill="none" stroke="#e2e2e2" stroke-width="0.9"/><rect x="2.6" y="4.4" width="4.6" height="4.1" fill="#e2e2e2"/></svg>
<svg style="left:1035px;top:413.6px;" width="6" height="10" viewBox="0 0 6 10"><circle cx="3" cy="3" r="2.6" fill="#f4f4f4"/><rect x="2.4" y="5.4" width="1.2" height="3.6" fill="#6a6a6a"/></svg>
<div style="left:899.2px;top:433.6px;width:78.4px;height:12px;background:#4b4b4b;border-radius:1.5px;"></div>
<span class="t" style="left:903.8px;top:435px;font-size:7px;line-height:10px;height:10px;color:#777;transform:scaleX(0.833);">Normal</span>
<svg style="left:970.6px;top:438px;" width="5" height="3.6" viewBox="0 0 5 3.6"><path d="M0.5 0.5 L2.5 2.8 L4.5 0.5" fill="none" stroke="#6f6f6f" stroke-width="0.9"/></svg>
<span class="t" style="left:983px;top:435px;font-size:7px;line-height:10px;height:10px;color:#777;transform:scaleX(0.857);">Opacity:</span>
<div style="left:1009.5px;top:434px;width:20.6px;height:11.4px;background:#4b4b4b;border-radius:1px;"></div>
<span class="t" style="left:1012px;top:435px;font-size:6.6px;line-height:10px;height:10px;color:#6a6a6a;transform:scaleX(0.829);">100%</span>
<div style="left:1032.5px;top:434px;width:7px;height:11.4px;background:#4b4b4b;border-radius:1px;"></div>
<svg style="left:1034px;top:438.2px;" width="4" height="3" viewBox="0 0 4 3"><path d="M0.4 0.4 L2 2.4 L3.6 0.4" fill="none" stroke="#6a6a6a" stroke-width="0.8"/></svg>
<div style="left:896px;top:448.6px;width:179.5px;height:1px;background:#4a4a4a;"></div>
<span class="t" style="left:899.2px;top:455px;font-size:7px;line-height:10px;height:10px;color:#777;transform:scaleX(0.861);">Lock:</span>
<svg style="left:920px;top:455.2px;" width="7.6" height="8" viewBox="0 0 7.6 8"><rect x="0.4" y="0.4" width="6.8" height="7.2" fill="none" stroke="#a8a8a8" stroke-width="0.6"/><rect x="0.6" y="0.6" width="2.2" height="2.4" fill="#a8a8a8"/><rect x="5" y="0.6" width="2.2" height="2.4" fill="#a8a8a8"/><rect x="2.8" y="3" width="2.2" height="2.2" fill="#a8a8a8"/><rect x="0.6" y="5.2" width="2.2" height="2.2" fill="#a8a8a8"/><rect x="5" y="5.2" width="2.2" height="2.2" fill="#a8a8a8"/></svg>
<svg style="left:933.6px;top:454.4px;" width="9" height="9.6" viewBox="0 0 9 9.6"><path d="M8.2 0.4 L8.8 1 L4.8 6.4 L3.6 5.2 Z" fill="#a8a8a8"/><path d="M3.1 5.8 L4.2 6.9 C3.8 8.6 2.2 9.4 0.6 9 C1.6 8.2 1.8 6.6 3.1 5.8Z" fill="#a8a8a8"/></svg>
<svg style="left:946.8px;top:454.6px;" width="9" height="9" viewBox="0 0 11 11"><path d="M5.5 1.6 V9.4 M1.6 5.5 H9.4" stroke="#a8a8a8" stroke-width="0.8" fill="none"/><path d="M5.5 0 L7.3 2.3 L3.7 2.3Z M5.5 11 L7.3 8.7 L3.7 8.7Z M0 5.5 L2.3 3.7 L2.3 7.3Z M11 5.5 L8.7 3.7 L8.7 7.3Z" fill="#a8a8a8"/></svg>
<svg style="left:960.6px;top:455.4px;" width="9" height="8" viewBox="0 0 9 8"><path d="M1.8 0 V6.2 H9 M0 1.8 H7.2 V8" fill="none" stroke="#a8a8a8" stroke-width="0.9"/></svg>
<svg style="left:976px;top:454.4px;" width="6.6" height="9" viewBox="0 0 6.6 9"><rect x="0.2" y="3.8" width="6.2" height="5" rx="0.6" fill="#a8a8a8"/><path d="M1.5 3.8 V2.4 A1.8 1.8 0 0 1 5.1 2.4 V3.8" fill="none" stroke="#a8a8a8" stroke-width="1"/></svg>
<span class="t" style="left:997px;top:455px;font-size:7px;line-height:10px;height:10px;color:#777;transform:scaleX(0.772);">Fill:</span>
<div style="left:1009.5px;top:453.6px;width:20.6px;height:11.4px;background:#4b4b4b;border-radius:1px;"></div>
<span class="t" style="left:1012px;top:455px;font-size:6.6px;line-height:10px;height:10px;color:#6a6a6a;transform:scaleX(0.829);">100%</span>
<div style="left:1032.5px;top:453.6px;width:7px;height:11.4px;background:#4b4b4b;border-radius:1px;"></div>
<svg style="left:1034px;top:457.8px;" width="4" height="3" viewBox="0 0 4 3"><path d="M0.4 0.4 L2 2.4 L3.6 0.4" fill="none" stroke="#6a6a6a" stroke-width="0.8"/></svg>
<div style="left:896px;top:469.4px;width:168.5px;height:1px;background:#4a4a4a;"></div>
<div style="left:914.5px;top:470px;width:1px;height:236px;background:#4a4a4a;"></div>
<svg style="left:901px;top:476.2px;" width="9.2" height="5.6" viewBox="0 0 9.2 5.6"><path d="M0.3 2.8 Q4.6 -1.6 8.9 2.8 Q4.6 7.2 0.3 2.8Z" fill="#b6b6b6"/><circle cx="4.6" cy="2.8" r="1.5" fill="#535353"/></svg>
<svg style="left:926.6px;top:476.6px;" width="6" height="4.2" viewBox="0 0 6 4.2"><path d="M0.5 0.5 L3 3.4 L5.5 0.5" fill="none" stroke="#c0c0c0" stroke-width="0.9"/></svg>
<svg style="left:935px;top:474.4px;" width="9" height="7.6" viewBox="0 0 9 7.6"><path d="M0 0.2 H3.4 L4.4 1.4 H9 V7.6 H0Z" fill="#e8e8e8"/><path d="M0 2.6 H9" stroke="#535353" stroke-width="0.6"/></svg>
<span class="t" style="left:951.2px;top:474px;font-size:7px;line-height:10px;height:10px;color:#dadada;transform:scaleX(0.880);">edite text</span>
<div style="left:896px;top:486.4px;width:168.5px;height:1px;background:#4a4a4a;"></div>
<svg style="left:901px;top:498.9px;" width="9.2" height="5.6" viewBox="0 0 9.2 5.6"><path d="M0.3 2.8 Q4.6 -1.6 8.9 2.8 Q4.6 7.2 0.3 2.8Z" fill="#b6b6b6"/><circle cx="4.6" cy="2.8" r="1.5" fill="#535353"/></svg>
<span class="t" style="left:943.2px;top:492px;font-size:15.2px;line-height:20px;height:20px;color:#e4e4e4;transform:scaleX(0.948);font-family:'Liberation Serif',serif;">T</span>
<span class="t" style="left:963px;top:497px;font-size:6.9px;line-height:10px;height:10px;color:#dadada;transform:scaleX(0.869);">Layer 2</span>
<div style="left:896px;top:515.9px;width:168.5px;height:1px;background:#4a4a4a;"></div>
<svg style="left:901px;top:527.2px;" width="9.2" height="5.6" viewBox="0 0 9.2 5.6"><path d="M0.3 2.8 Q4.6 -1.6 8.9 2.8 Q4.6 7.2 0.3 2.8Z" fill="#b6b6b6"/><circle cx="4.6" cy="2.8" r="1.5" fill="#535353"/></svg>
<div style="left:938px;top:519.6px;width:15px;height:20.6px;background-color:#fff;background-image:conic-gradient(#fff 25%,#d4d4d4 0 50%,#fff 0 75%,#d4d4d4 0);background-size:4px 4px;"></div>
<div style="left:940.6px;top:522.6px;width:2px;height:2.4px;background:#b0483c;"></div>
<span class="t" style="left:959.2px;top:526px;font-size:6.9px;line-height:10px;height:10px;color:#dadada;transform:scaleX(0.878);">Layer 3</span>
<div style="left:896px;top:544.2px;width:168.5px;height:1px;background:#4a4a4a;"></div>
<svg style="left:901px;top:555.4000000000001px;" width="9.2" height="5.6" viewBox="0 0 9.2 5.6"><path d="M0.3 2.8 Q4.6 -1.6 8.9 2.8 Q4.6 7.2 0.3 2.8Z" fill="#b6b6b6"/><circle cx="4.6" cy="2.8" r="1.5" fill="#535353"/></svg>
<span class="t" style="left:943.2px;top:548px;font-size:15.2px;line-height:20px;height:20px;color:#e4e4e4;transform:scaleX(0.948);font-family:'Liberation Serif',serif;">T</span>
<span class="t" style="left:963px;top:554px;font-size:6.9px;line-height:10px;height:10px;color:#dadada;transform:scaleX(0.946);">citta0000000...&lt;&lt;&lt;&lt;&lt;&lt;&lt;&lt;0 d</span>
<div style="left:896px;top:572.4px;width:168.5px;height:1px;background:#4a4a4a;"></div>
<svg style="left:902.4px;top:582.4px;" width="8" height="8" viewBox="0 0 8 8"><path d="M7 0.4 V7.4 H0.4" fill="none" stroke="#5c5c5c" stroke-width="0.9"/></svg>
<span class="t" style="left:943.2px;top:577px;font-size:15.2px;line-height:20px;height:20px;color:#e4e4e4;transform:scaleX(0.948);font-family:'Liberation Serif',serif;">T</span>
<span class="t" style="left:963px;top:583px;font-size:6.9px;line-height:10px;height:10px;color:#dadada;transform:scaleX(0.816);">1aa</span>
<div style="left:896px;top:601.0px;width:168.5px;height:1px;background:#4a4a4a;"></div>
<svg style="left:901px;top:612.4000000000001px;" width="9.2" height="5.6" viewBox="0 0 9.2 5.6"><path d="M0.3 2.8 Q4.6 -1.6 8.9 2.8 Q4.6 7.2 0.3 2.8Z" fill="#b6b6b6"/><circle cx="4.6" cy="2.8" r="1.5" fill="#535353"/></svg>
<span class="t" style="left:943.2px;top:605px;font-size:15.2px;line-height:20px;height:20px;color:#e4e4e4;transform:scaleX(0.948);font-family:'Liberation Serif',serif;">T</span>
<span class="t" style="left:963px;top:611px;font-size:6.9px;line-height:10px;height:10px;color:#dadada;transform:scaleX(0.834);">169</span>
<div style="left:896px;top:629.4px;width:168.5px;height:1px;background:#4a4a4a;"></div>
<svg style="left:901px;top:640.9000000000001px;" width="9.2" height="5.6" viewBox="0 0 9.2 5.6"><path d="M0.3 2.8 Q4.6 -1.6 8.9 2.8 Q4.6 7.2 0.3 2.8Z" fill="#b6b6b6"/><circle cx="4.6" cy="2.8" r="1.5" fill="#535353"/></svg>
<span class="t" style="left:943.2px;top:634px;font-size:15.2px;line-height:20px;height:20px;color:#e4e4e4;transform:scaleX(0.948);font-family:'Liberation Serif',serif;">T</span>
<span class="t" style="left:963px;top:639px;font-size:6.9px;line-height:10px;height:10px;color:#dadada;transform:scaleX(0.974);">m</span>
<div style="left:896px;top:657.9px;width:168.5px;height:1px;background:#4a4a4a;"></div>
<svg style="left:901px;top:669.2px;" width="9.2" height="5.6" viewBox="0 0 9.2 5.6"><path d="M0.3 2.8 Q4.6 -1.6 8.9 2.8 Q4.6 7.2 0.3 2.8Z" fill="#b6b6b6"/><circle cx="4.6" cy="2.8" r="1.5" fill="#535353"/></svg>
<span class="t" style="left:943.2px;top:662px;font-size:15.2px;line-height:20px;height:20px;color:#e4e4e4;transform:scaleX(0.948);font-family:'Liberation Serif',serif;">T</span>
<span class="t" style="left:963px;top:668px;font-size:6.9px;line-height:10px;height:10px;color:#dadada;transform:scaleX(0.851);">129 1 a</span>
<div style="left:896px;top:686.2px;width:168.5px;height:1px;background:#4a4a4a;"></div>
<svg style="left:901px;top:697.6px;" width="9.2" height="5.6" viewBox="0 0 9.2 5.6"><path d="M0.3 2.8 Q4.6 -1.6 8.9 2.8 Q4.6 7.2 0.3 2.8Z" fill="#b6b6b6"/><circle cx="4.6" cy="2.8" r="1.5" fill="#535353"/></svg>
<span class="t" style="left:943.2px;top:690px;font-size:15.2px;line-height:20px;height:20px;color:#e4e4e4;transform:scaleX(0.948);font-family:'Liberation Serif',serif;">T</span>
<span class="t" style="left:963px;top:696px;font-size:6.9px;line-height:10px;height:10px;color:#dadada;transform:scaleX(0.840);">01.01.1990</span>
<div style="left:1064.6px;top:470px;width:10.8px;height:236px;background:#4a4a4a;"></div>
<svg style="left:1067.4px;top:474.4px;" width="5" height="3.4" viewBox="0 0 5 3.4"><path d="M0.5 3 L2.5 0.6 L4.5 3" fill="none" stroke="#7a7a7a" stroke-width="0.8"/></svg>
<div style="left:1065.6px;top:490px;width:8.8px;height:65px;background:#6a6a6a;"></div>
<svg style="left:1067.4px;top:697px;" width="5" height="3.4" viewBox="0 0 5 3.4"><path d="M0.5 0.4 L2.5 2.8 L4.5 0.4" fill="none" stroke="#7a7a7a" stroke-width="0.8"/></svg>
<div style="left:896px;top:705.6px;width:179.5px;height:14.4px;background:#535353;"></div>
<div style="left:896px;top:704.8px;width:179.5px;height:1.1px;background:#444;"></div>
<svg style="left:947.4px;top:711px;" width="10.4" height="5.4" viewBox="0 0 10.4 5.4"><rect x="0.5" y="0.5" width="5" height="4.2" rx="2.1" fill="none" stroke="#7c7c7c" stroke-width="0.9"/><rect x="4.9" y="0.5" width="5" height="4.2" rx="2.1" fill="none" stroke="#7c7c7c" stroke-width="0.9"/></svg>
<span class="t" style="left:965.6px;top:708px;font-size:8.2px;line-height:12px;height:12px;color:#7c7c7c;transform:scaleX(1.171);font-family:'Liberation Serif',serif;font-style:italic;">fx</span>
<svg style="left:981.8px;top:709.6px;" width="9.2" height="7.8" viewBox="0 0 9.2 7.8"><rect x="0.5" y="0.5" width="8.2" height="6.8" fill="none" stroke="#e2e2e2" stroke-width="1"/><circle cx="4.6" cy="3.9" r="2" fill="#e2e2e2"/></svg>
<svg style="left:1000px;top:709.6px;" width="8.4" height="8.4" viewBox="0 0 8.4 8.4"><circle cx="4.2" cy="4.2" r="3.7" fill="none" stroke="#e2e2e2" stroke-width="0.9"/><path d="M1.5 6.8 A3.7 3.7 0 0 1 6.8 1.5 Z" fill="#e2e2e2"/></svg>
<svg style="left:1015.8px;top:709.8px;" width="9" height="7.4" viewBox="0 0 9 7.4"><path d="M0 0 H3.4 L4.4 1.2 H9 V7.4 H0Z" fill="#e2e2e2"/></svg>
<svg style="left:1033.6px;top:709.2px;" width="8" height="8.8" viewBox="0 0 8 8.8"><rect x="0.5" y="0.5" width="7" height="7.8" fill="none" stroke="#e2e2e2" stroke-width="0.9"/><path d="M4 2.4 V6.4 M2 4.4 H6" stroke="#e2e2e2" stroke-width="0.9"/></svg>
<svg style="left:1050px;top:709px;" width="7.4" height="9.2" viewBox="0 0 7.4 9.2"><path d="M0 1.8 H7.4 M2.6 1.6 V0.5 H4.8 V1.6" fill="none" stroke="#7c7c7c" stroke-width="0.9"/><path d="M0.9 2.6 H6.5 L6 9 H1.4Z" fill="none" stroke="#7c7c7c" stroke-width="0.9"/><path d="M2.8 3.8 V7.8 M4.6 3.8 V7.8" stroke="#7c7c7c" stroke-width="0.6"/></svg>
</div></div></body></html>
